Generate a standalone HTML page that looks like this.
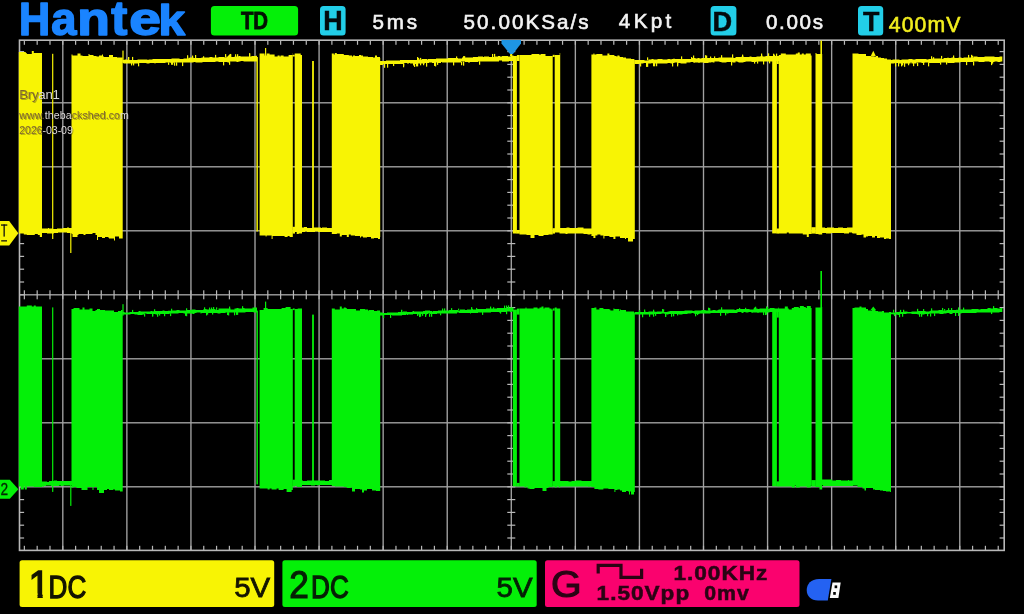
<!DOCTYPE html>
<html lang="en"><head><meta charset="utf-8"><title>Hantek oscilloscope capture</title>
<style>
html,body{margin:0;padding:0;background:#000;}
body{width:1024px;height:614px;overflow:hidden;position:relative;font-family:"Liberation Sans",sans-serif;}
svg text{white-space:pre;}
</style></head>
<body>
<svg role="img" aria-label="Hantek oscilloscope screen" width="1024" height="614" viewBox="0 0 1024 614" style="position:absolute;left:0;top:0;display:block;will-change:transform">
<rect width="1024" height="614" fill="#000"/>
<rect x="62.12" y="40.20" width="1.36" height="510.20" fill="#a2a2a2"/>
<rect x="126.19" y="40.20" width="1.36" height="510.20" fill="#a2a2a2"/>
<rect x="190.26" y="40.20" width="1.36" height="510.20" fill="#a2a2a2"/>
<rect x="254.33" y="40.20" width="1.36" height="510.20" fill="#a2a2a2"/>
<rect x="318.40" y="40.20" width="1.36" height="510.20" fill="#a2a2a2"/>
<rect x="382.47" y="40.20" width="1.36" height="510.20" fill="#a2a2a2"/>
<rect x="446.54" y="40.20" width="1.36" height="510.20" fill="#a2a2a2"/>
<rect x="510.61" y="40.20" width="1.36" height="510.20" fill="#a2a2a2"/>
<rect x="574.68" y="40.20" width="1.36" height="510.20" fill="#a2a2a2"/>
<rect x="638.75" y="40.20" width="1.36" height="510.20" fill="#a2a2a2"/>
<rect x="702.82" y="40.20" width="1.36" height="510.20" fill="#a2a2a2"/>
<rect x="766.89" y="40.20" width="1.36" height="510.20" fill="#a2a2a2"/>
<rect x="830.96" y="40.20" width="1.36" height="510.20" fill="#a2a2a2"/>
<rect x="895.03" y="40.20" width="1.36" height="510.20" fill="#a2a2a2"/>
<rect x="959.10" y="40.20" width="1.36" height="510.20" fill="#a2a2a2"/>
<rect x="19.50" y="102.12" width="984.70" height="1.36" fill="#a2a2a2"/>
<rect x="19.50" y="166.12" width="984.70" height="1.36" fill="#a2a2a2"/>
<rect x="19.50" y="230.12" width="984.70" height="1.36" fill="#a2a2a2"/>
<rect x="19.50" y="294.12" width="984.70" height="1.36" fill="#a2a2a2"/>
<rect x="19.50" y="358.12" width="984.70" height="1.36" fill="#a2a2a2"/>
<rect x="19.50" y="422.12" width="984.70" height="1.36" fill="#a2a2a2"/>
<rect x="19.50" y="486.12" width="984.70" height="1.36" fill="#a2a2a2"/>
<rect x="23.76" y="40.20" width="1.2" height="4.6" fill="#b8b8b8"/>
<rect x="23.76" y="545.80" width="1.2" height="4.6" fill="#b8b8b8"/>
<rect x="23.76" y="290.30" width="1.2" height="9" fill="#b8b8b8"/>
<rect x="36.57" y="40.20" width="1.2" height="4.6" fill="#b8b8b8"/>
<rect x="36.57" y="545.80" width="1.2" height="4.6" fill="#b8b8b8"/>
<rect x="36.57" y="290.30" width="1.2" height="9" fill="#b8b8b8"/>
<rect x="49.39" y="40.20" width="1.2" height="4.6" fill="#b8b8b8"/>
<rect x="49.39" y="545.80" width="1.2" height="4.6" fill="#b8b8b8"/>
<rect x="49.39" y="290.30" width="1.2" height="9" fill="#b8b8b8"/>
<rect x="62.20" y="40.20" width="1.2" height="4.6" fill="#b8b8b8"/>
<rect x="62.20" y="545.80" width="1.2" height="4.6" fill="#b8b8b8"/>
<rect x="62.20" y="290.30" width="1.2" height="9" fill="#b8b8b8"/>
<rect x="75.01" y="40.20" width="1.2" height="4.6" fill="#b8b8b8"/>
<rect x="75.01" y="545.80" width="1.2" height="4.6" fill="#b8b8b8"/>
<rect x="75.01" y="290.30" width="1.2" height="9" fill="#b8b8b8"/>
<rect x="87.83" y="40.20" width="1.2" height="4.6" fill="#b8b8b8"/>
<rect x="87.83" y="545.80" width="1.2" height="4.6" fill="#b8b8b8"/>
<rect x="87.83" y="290.30" width="1.2" height="9" fill="#b8b8b8"/>
<rect x="100.64" y="40.20" width="1.2" height="4.6" fill="#b8b8b8"/>
<rect x="100.64" y="545.80" width="1.2" height="4.6" fill="#b8b8b8"/>
<rect x="100.64" y="290.30" width="1.2" height="9" fill="#b8b8b8"/>
<rect x="113.46" y="40.20" width="1.2" height="4.6" fill="#b8b8b8"/>
<rect x="113.46" y="545.80" width="1.2" height="4.6" fill="#b8b8b8"/>
<rect x="113.46" y="290.30" width="1.2" height="9" fill="#b8b8b8"/>
<rect x="126.27" y="40.20" width="1.2" height="4.6" fill="#b8b8b8"/>
<rect x="126.27" y="545.80" width="1.2" height="4.6" fill="#b8b8b8"/>
<rect x="126.27" y="290.30" width="1.2" height="9" fill="#b8b8b8"/>
<rect x="139.08" y="40.20" width="1.2" height="4.6" fill="#b8b8b8"/>
<rect x="139.08" y="545.80" width="1.2" height="4.6" fill="#b8b8b8"/>
<rect x="139.08" y="290.30" width="1.2" height="9" fill="#b8b8b8"/>
<rect x="151.90" y="40.20" width="1.2" height="4.6" fill="#b8b8b8"/>
<rect x="151.90" y="545.80" width="1.2" height="4.6" fill="#b8b8b8"/>
<rect x="151.90" y="290.30" width="1.2" height="9" fill="#b8b8b8"/>
<rect x="164.71" y="40.20" width="1.2" height="4.6" fill="#b8b8b8"/>
<rect x="164.71" y="545.80" width="1.2" height="4.6" fill="#b8b8b8"/>
<rect x="164.71" y="290.30" width="1.2" height="9" fill="#b8b8b8"/>
<rect x="177.53" y="40.20" width="1.2" height="4.6" fill="#b8b8b8"/>
<rect x="177.53" y="545.80" width="1.2" height="4.6" fill="#b8b8b8"/>
<rect x="177.53" y="290.30" width="1.2" height="9" fill="#b8b8b8"/>
<rect x="190.34" y="40.20" width="1.2" height="4.6" fill="#b8b8b8"/>
<rect x="190.34" y="545.80" width="1.2" height="4.6" fill="#b8b8b8"/>
<rect x="190.34" y="290.30" width="1.2" height="9" fill="#b8b8b8"/>
<rect x="203.15" y="40.20" width="1.2" height="4.6" fill="#b8b8b8"/>
<rect x="203.15" y="545.80" width="1.2" height="4.6" fill="#b8b8b8"/>
<rect x="203.15" y="290.30" width="1.2" height="9" fill="#b8b8b8"/>
<rect x="215.97" y="40.20" width="1.2" height="4.6" fill="#b8b8b8"/>
<rect x="215.97" y="545.80" width="1.2" height="4.6" fill="#b8b8b8"/>
<rect x="215.97" y="290.30" width="1.2" height="9" fill="#b8b8b8"/>
<rect x="228.78" y="40.20" width="1.2" height="4.6" fill="#b8b8b8"/>
<rect x="228.78" y="545.80" width="1.2" height="4.6" fill="#b8b8b8"/>
<rect x="228.78" y="290.30" width="1.2" height="9" fill="#b8b8b8"/>
<rect x="241.60" y="40.20" width="1.2" height="4.6" fill="#b8b8b8"/>
<rect x="241.60" y="545.80" width="1.2" height="4.6" fill="#b8b8b8"/>
<rect x="241.60" y="290.30" width="1.2" height="9" fill="#b8b8b8"/>
<rect x="254.41" y="40.20" width="1.2" height="4.6" fill="#b8b8b8"/>
<rect x="254.41" y="545.80" width="1.2" height="4.6" fill="#b8b8b8"/>
<rect x="254.41" y="290.30" width="1.2" height="9" fill="#b8b8b8"/>
<rect x="267.22" y="40.20" width="1.2" height="4.6" fill="#b8b8b8"/>
<rect x="267.22" y="545.80" width="1.2" height="4.6" fill="#b8b8b8"/>
<rect x="267.22" y="290.30" width="1.2" height="9" fill="#b8b8b8"/>
<rect x="280.04" y="40.20" width="1.2" height="4.6" fill="#b8b8b8"/>
<rect x="280.04" y="545.80" width="1.2" height="4.6" fill="#b8b8b8"/>
<rect x="280.04" y="290.30" width="1.2" height="9" fill="#b8b8b8"/>
<rect x="292.85" y="40.20" width="1.2" height="4.6" fill="#b8b8b8"/>
<rect x="292.85" y="545.80" width="1.2" height="4.6" fill="#b8b8b8"/>
<rect x="292.85" y="290.30" width="1.2" height="9" fill="#b8b8b8"/>
<rect x="305.67" y="40.20" width="1.2" height="4.6" fill="#b8b8b8"/>
<rect x="305.67" y="545.80" width="1.2" height="4.6" fill="#b8b8b8"/>
<rect x="305.67" y="290.30" width="1.2" height="9" fill="#b8b8b8"/>
<rect x="318.48" y="40.20" width="1.2" height="4.6" fill="#b8b8b8"/>
<rect x="318.48" y="545.80" width="1.2" height="4.6" fill="#b8b8b8"/>
<rect x="318.48" y="290.30" width="1.2" height="9" fill="#b8b8b8"/>
<rect x="331.29" y="40.20" width="1.2" height="4.6" fill="#b8b8b8"/>
<rect x="331.29" y="545.80" width="1.2" height="4.6" fill="#b8b8b8"/>
<rect x="331.29" y="290.30" width="1.2" height="9" fill="#b8b8b8"/>
<rect x="344.11" y="40.20" width="1.2" height="4.6" fill="#b8b8b8"/>
<rect x="344.11" y="545.80" width="1.2" height="4.6" fill="#b8b8b8"/>
<rect x="344.11" y="290.30" width="1.2" height="9" fill="#b8b8b8"/>
<rect x="356.92" y="40.20" width="1.2" height="4.6" fill="#b8b8b8"/>
<rect x="356.92" y="545.80" width="1.2" height="4.6" fill="#b8b8b8"/>
<rect x="356.92" y="290.30" width="1.2" height="9" fill="#b8b8b8"/>
<rect x="369.74" y="40.20" width="1.2" height="4.6" fill="#b8b8b8"/>
<rect x="369.74" y="545.80" width="1.2" height="4.6" fill="#b8b8b8"/>
<rect x="369.74" y="290.30" width="1.2" height="9" fill="#b8b8b8"/>
<rect x="382.55" y="40.20" width="1.2" height="4.6" fill="#b8b8b8"/>
<rect x="382.55" y="545.80" width="1.2" height="4.6" fill="#b8b8b8"/>
<rect x="382.55" y="290.30" width="1.2" height="9" fill="#b8b8b8"/>
<rect x="395.36" y="40.20" width="1.2" height="4.6" fill="#b8b8b8"/>
<rect x="395.36" y="545.80" width="1.2" height="4.6" fill="#b8b8b8"/>
<rect x="395.36" y="290.30" width="1.2" height="9" fill="#b8b8b8"/>
<rect x="408.18" y="40.20" width="1.2" height="4.6" fill="#b8b8b8"/>
<rect x="408.18" y="545.80" width="1.2" height="4.6" fill="#b8b8b8"/>
<rect x="408.18" y="290.30" width="1.2" height="9" fill="#b8b8b8"/>
<rect x="420.99" y="40.20" width="1.2" height="4.6" fill="#b8b8b8"/>
<rect x="420.99" y="545.80" width="1.2" height="4.6" fill="#b8b8b8"/>
<rect x="420.99" y="290.30" width="1.2" height="9" fill="#b8b8b8"/>
<rect x="433.81" y="40.20" width="1.2" height="4.6" fill="#b8b8b8"/>
<rect x="433.81" y="545.80" width="1.2" height="4.6" fill="#b8b8b8"/>
<rect x="433.81" y="290.30" width="1.2" height="9" fill="#b8b8b8"/>
<rect x="446.62" y="40.20" width="1.2" height="4.6" fill="#b8b8b8"/>
<rect x="446.62" y="545.80" width="1.2" height="4.6" fill="#b8b8b8"/>
<rect x="446.62" y="290.30" width="1.2" height="9" fill="#b8b8b8"/>
<rect x="459.43" y="40.20" width="1.2" height="4.6" fill="#b8b8b8"/>
<rect x="459.43" y="545.80" width="1.2" height="4.6" fill="#b8b8b8"/>
<rect x="459.43" y="290.30" width="1.2" height="9" fill="#b8b8b8"/>
<rect x="472.25" y="40.20" width="1.2" height="4.6" fill="#b8b8b8"/>
<rect x="472.25" y="545.80" width="1.2" height="4.6" fill="#b8b8b8"/>
<rect x="472.25" y="290.30" width="1.2" height="9" fill="#b8b8b8"/>
<rect x="485.06" y="40.20" width="1.2" height="4.6" fill="#b8b8b8"/>
<rect x="485.06" y="545.80" width="1.2" height="4.6" fill="#b8b8b8"/>
<rect x="485.06" y="290.30" width="1.2" height="9" fill="#b8b8b8"/>
<rect x="497.88" y="40.20" width="1.2" height="4.6" fill="#b8b8b8"/>
<rect x="497.88" y="545.80" width="1.2" height="4.6" fill="#b8b8b8"/>
<rect x="497.88" y="290.30" width="1.2" height="9" fill="#b8b8b8"/>
<rect x="510.69" y="40.20" width="1.2" height="4.6" fill="#b8b8b8"/>
<rect x="510.69" y="545.80" width="1.2" height="4.6" fill="#b8b8b8"/>
<rect x="510.69" y="290.30" width="1.2" height="9" fill="#b8b8b8"/>
<rect x="523.50" y="40.20" width="1.2" height="4.6" fill="#b8b8b8"/>
<rect x="523.50" y="545.80" width="1.2" height="4.6" fill="#b8b8b8"/>
<rect x="523.50" y="290.30" width="1.2" height="9" fill="#b8b8b8"/>
<rect x="536.32" y="40.20" width="1.2" height="4.6" fill="#b8b8b8"/>
<rect x="536.32" y="545.80" width="1.2" height="4.6" fill="#b8b8b8"/>
<rect x="536.32" y="290.30" width="1.2" height="9" fill="#b8b8b8"/>
<rect x="549.13" y="40.20" width="1.2" height="4.6" fill="#b8b8b8"/>
<rect x="549.13" y="545.80" width="1.2" height="4.6" fill="#b8b8b8"/>
<rect x="549.13" y="290.30" width="1.2" height="9" fill="#b8b8b8"/>
<rect x="561.95" y="40.20" width="1.2" height="4.6" fill="#b8b8b8"/>
<rect x="561.95" y="545.80" width="1.2" height="4.6" fill="#b8b8b8"/>
<rect x="561.95" y="290.30" width="1.2" height="9" fill="#b8b8b8"/>
<rect x="574.76" y="40.20" width="1.2" height="4.6" fill="#b8b8b8"/>
<rect x="574.76" y="545.80" width="1.2" height="4.6" fill="#b8b8b8"/>
<rect x="574.76" y="290.30" width="1.2" height="9" fill="#b8b8b8"/>
<rect x="587.57" y="40.20" width="1.2" height="4.6" fill="#b8b8b8"/>
<rect x="587.57" y="545.80" width="1.2" height="4.6" fill="#b8b8b8"/>
<rect x="587.57" y="290.30" width="1.2" height="9" fill="#b8b8b8"/>
<rect x="600.39" y="40.20" width="1.2" height="4.6" fill="#b8b8b8"/>
<rect x="600.39" y="545.80" width="1.2" height="4.6" fill="#b8b8b8"/>
<rect x="600.39" y="290.30" width="1.2" height="9" fill="#b8b8b8"/>
<rect x="613.20" y="40.20" width="1.2" height="4.6" fill="#b8b8b8"/>
<rect x="613.20" y="545.80" width="1.2" height="4.6" fill="#b8b8b8"/>
<rect x="613.20" y="290.30" width="1.2" height="9" fill="#b8b8b8"/>
<rect x="626.02" y="40.20" width="1.2" height="4.6" fill="#b8b8b8"/>
<rect x="626.02" y="545.80" width="1.2" height="4.6" fill="#b8b8b8"/>
<rect x="626.02" y="290.30" width="1.2" height="9" fill="#b8b8b8"/>
<rect x="638.83" y="40.20" width="1.2" height="4.6" fill="#b8b8b8"/>
<rect x="638.83" y="545.80" width="1.2" height="4.6" fill="#b8b8b8"/>
<rect x="638.83" y="290.30" width="1.2" height="9" fill="#b8b8b8"/>
<rect x="651.64" y="40.20" width="1.2" height="4.6" fill="#b8b8b8"/>
<rect x="651.64" y="545.80" width="1.2" height="4.6" fill="#b8b8b8"/>
<rect x="651.64" y="290.30" width="1.2" height="9" fill="#b8b8b8"/>
<rect x="664.46" y="40.20" width="1.2" height="4.6" fill="#b8b8b8"/>
<rect x="664.46" y="545.80" width="1.2" height="4.6" fill="#b8b8b8"/>
<rect x="664.46" y="290.30" width="1.2" height="9" fill="#b8b8b8"/>
<rect x="677.27" y="40.20" width="1.2" height="4.6" fill="#b8b8b8"/>
<rect x="677.27" y="545.80" width="1.2" height="4.6" fill="#b8b8b8"/>
<rect x="677.27" y="290.30" width="1.2" height="9" fill="#b8b8b8"/>
<rect x="690.09" y="40.20" width="1.2" height="4.6" fill="#b8b8b8"/>
<rect x="690.09" y="545.80" width="1.2" height="4.6" fill="#b8b8b8"/>
<rect x="690.09" y="290.30" width="1.2" height="9" fill="#b8b8b8"/>
<rect x="702.90" y="40.20" width="1.2" height="4.6" fill="#b8b8b8"/>
<rect x="702.90" y="545.80" width="1.2" height="4.6" fill="#b8b8b8"/>
<rect x="702.90" y="290.30" width="1.2" height="9" fill="#b8b8b8"/>
<rect x="715.71" y="40.20" width="1.2" height="4.6" fill="#b8b8b8"/>
<rect x="715.71" y="545.80" width="1.2" height="4.6" fill="#b8b8b8"/>
<rect x="715.71" y="290.30" width="1.2" height="9" fill="#b8b8b8"/>
<rect x="728.53" y="40.20" width="1.2" height="4.6" fill="#b8b8b8"/>
<rect x="728.53" y="545.80" width="1.2" height="4.6" fill="#b8b8b8"/>
<rect x="728.53" y="290.30" width="1.2" height="9" fill="#b8b8b8"/>
<rect x="741.34" y="40.20" width="1.2" height="4.6" fill="#b8b8b8"/>
<rect x="741.34" y="545.80" width="1.2" height="4.6" fill="#b8b8b8"/>
<rect x="741.34" y="290.30" width="1.2" height="9" fill="#b8b8b8"/>
<rect x="754.16" y="40.20" width="1.2" height="4.6" fill="#b8b8b8"/>
<rect x="754.16" y="545.80" width="1.2" height="4.6" fill="#b8b8b8"/>
<rect x="754.16" y="290.30" width="1.2" height="9" fill="#b8b8b8"/>
<rect x="766.97" y="40.20" width="1.2" height="4.6" fill="#b8b8b8"/>
<rect x="766.97" y="545.80" width="1.2" height="4.6" fill="#b8b8b8"/>
<rect x="766.97" y="290.30" width="1.2" height="9" fill="#b8b8b8"/>
<rect x="779.78" y="40.20" width="1.2" height="4.6" fill="#b8b8b8"/>
<rect x="779.78" y="545.80" width="1.2" height="4.6" fill="#b8b8b8"/>
<rect x="779.78" y="290.30" width="1.2" height="9" fill="#b8b8b8"/>
<rect x="792.60" y="40.20" width="1.2" height="4.6" fill="#b8b8b8"/>
<rect x="792.60" y="545.80" width="1.2" height="4.6" fill="#b8b8b8"/>
<rect x="792.60" y="290.30" width="1.2" height="9" fill="#b8b8b8"/>
<rect x="805.41" y="40.20" width="1.2" height="4.6" fill="#b8b8b8"/>
<rect x="805.41" y="545.80" width="1.2" height="4.6" fill="#b8b8b8"/>
<rect x="805.41" y="290.30" width="1.2" height="9" fill="#b8b8b8"/>
<rect x="818.23" y="40.20" width="1.2" height="4.6" fill="#b8b8b8"/>
<rect x="818.23" y="545.80" width="1.2" height="4.6" fill="#b8b8b8"/>
<rect x="818.23" y="290.30" width="1.2" height="9" fill="#b8b8b8"/>
<rect x="831.04" y="40.20" width="1.2" height="4.6" fill="#b8b8b8"/>
<rect x="831.04" y="545.80" width="1.2" height="4.6" fill="#b8b8b8"/>
<rect x="831.04" y="290.30" width="1.2" height="9" fill="#b8b8b8"/>
<rect x="843.85" y="40.20" width="1.2" height="4.6" fill="#b8b8b8"/>
<rect x="843.85" y="545.80" width="1.2" height="4.6" fill="#b8b8b8"/>
<rect x="843.85" y="290.30" width="1.2" height="9" fill="#b8b8b8"/>
<rect x="856.67" y="40.20" width="1.2" height="4.6" fill="#b8b8b8"/>
<rect x="856.67" y="545.80" width="1.2" height="4.6" fill="#b8b8b8"/>
<rect x="856.67" y="290.30" width="1.2" height="9" fill="#b8b8b8"/>
<rect x="869.48" y="40.20" width="1.2" height="4.6" fill="#b8b8b8"/>
<rect x="869.48" y="545.80" width="1.2" height="4.6" fill="#b8b8b8"/>
<rect x="869.48" y="290.30" width="1.2" height="9" fill="#b8b8b8"/>
<rect x="882.30" y="40.20" width="1.2" height="4.6" fill="#b8b8b8"/>
<rect x="882.30" y="545.80" width="1.2" height="4.6" fill="#b8b8b8"/>
<rect x="882.30" y="290.30" width="1.2" height="9" fill="#b8b8b8"/>
<rect x="895.11" y="40.20" width="1.2" height="4.6" fill="#b8b8b8"/>
<rect x="895.11" y="545.80" width="1.2" height="4.6" fill="#b8b8b8"/>
<rect x="895.11" y="290.30" width="1.2" height="9" fill="#b8b8b8"/>
<rect x="907.92" y="40.20" width="1.2" height="4.6" fill="#b8b8b8"/>
<rect x="907.92" y="545.80" width="1.2" height="4.6" fill="#b8b8b8"/>
<rect x="907.92" y="290.30" width="1.2" height="9" fill="#b8b8b8"/>
<rect x="920.74" y="40.20" width="1.2" height="4.6" fill="#b8b8b8"/>
<rect x="920.74" y="545.80" width="1.2" height="4.6" fill="#b8b8b8"/>
<rect x="920.74" y="290.30" width="1.2" height="9" fill="#b8b8b8"/>
<rect x="933.55" y="40.20" width="1.2" height="4.6" fill="#b8b8b8"/>
<rect x="933.55" y="545.80" width="1.2" height="4.6" fill="#b8b8b8"/>
<rect x="933.55" y="290.30" width="1.2" height="9" fill="#b8b8b8"/>
<rect x="946.37" y="40.20" width="1.2" height="4.6" fill="#b8b8b8"/>
<rect x="946.37" y="545.80" width="1.2" height="4.6" fill="#b8b8b8"/>
<rect x="946.37" y="290.30" width="1.2" height="9" fill="#b8b8b8"/>
<rect x="959.18" y="40.20" width="1.2" height="4.6" fill="#b8b8b8"/>
<rect x="959.18" y="545.80" width="1.2" height="4.6" fill="#b8b8b8"/>
<rect x="959.18" y="290.30" width="1.2" height="9" fill="#b8b8b8"/>
<rect x="971.99" y="40.20" width="1.2" height="4.6" fill="#b8b8b8"/>
<rect x="971.99" y="545.80" width="1.2" height="4.6" fill="#b8b8b8"/>
<rect x="971.99" y="290.30" width="1.2" height="9" fill="#b8b8b8"/>
<rect x="984.81" y="40.20" width="1.2" height="4.6" fill="#b8b8b8"/>
<rect x="984.81" y="545.80" width="1.2" height="4.6" fill="#b8b8b8"/>
<rect x="984.81" y="290.30" width="1.2" height="9" fill="#b8b8b8"/>
<rect x="997.62" y="40.20" width="1.2" height="4.6" fill="#b8b8b8"/>
<rect x="997.62" y="545.80" width="1.2" height="4.6" fill="#b8b8b8"/>
<rect x="997.62" y="290.30" width="1.2" height="9" fill="#b8b8b8"/>
<rect x="19.50" y="51.00" width="4.6" height="1.2" fill="#b8b8b8"/>
<rect x="999.60" y="51.00" width="4.6" height="1.2" fill="#b8b8b8"/>
<rect x="507.29" y="51.00" width="8" height="1.2" fill="#b8b8b8"/>
<rect x="19.50" y="63.80" width="4.6" height="1.2" fill="#b8b8b8"/>
<rect x="999.60" y="63.80" width="4.6" height="1.2" fill="#b8b8b8"/>
<rect x="507.29" y="63.80" width="8" height="1.2" fill="#b8b8b8"/>
<rect x="19.50" y="76.60" width="4.6" height="1.2" fill="#b8b8b8"/>
<rect x="999.60" y="76.60" width="4.6" height="1.2" fill="#b8b8b8"/>
<rect x="507.29" y="76.60" width="8" height="1.2" fill="#b8b8b8"/>
<rect x="19.50" y="89.40" width="4.6" height="1.2" fill="#b8b8b8"/>
<rect x="999.60" y="89.40" width="4.6" height="1.2" fill="#b8b8b8"/>
<rect x="507.29" y="89.40" width="8" height="1.2" fill="#b8b8b8"/>
<rect x="19.50" y="102.20" width="4.6" height="1.2" fill="#b8b8b8"/>
<rect x="999.60" y="102.20" width="4.6" height="1.2" fill="#b8b8b8"/>
<rect x="507.29" y="102.20" width="8" height="1.2" fill="#b8b8b8"/>
<rect x="19.50" y="115.00" width="4.6" height="1.2" fill="#b8b8b8"/>
<rect x="999.60" y="115.00" width="4.6" height="1.2" fill="#b8b8b8"/>
<rect x="507.29" y="115.00" width="8" height="1.2" fill="#b8b8b8"/>
<rect x="19.50" y="127.80" width="4.6" height="1.2" fill="#b8b8b8"/>
<rect x="999.60" y="127.80" width="4.6" height="1.2" fill="#b8b8b8"/>
<rect x="507.29" y="127.80" width="8" height="1.2" fill="#b8b8b8"/>
<rect x="19.50" y="140.60" width="4.6" height="1.2" fill="#b8b8b8"/>
<rect x="999.60" y="140.60" width="4.6" height="1.2" fill="#b8b8b8"/>
<rect x="507.29" y="140.60" width="8" height="1.2" fill="#b8b8b8"/>
<rect x="19.50" y="153.40" width="4.6" height="1.2" fill="#b8b8b8"/>
<rect x="999.60" y="153.40" width="4.6" height="1.2" fill="#b8b8b8"/>
<rect x="507.29" y="153.40" width="8" height="1.2" fill="#b8b8b8"/>
<rect x="19.50" y="166.20" width="4.6" height="1.2" fill="#b8b8b8"/>
<rect x="999.60" y="166.20" width="4.6" height="1.2" fill="#b8b8b8"/>
<rect x="507.29" y="166.20" width="8" height="1.2" fill="#b8b8b8"/>
<rect x="19.50" y="179.00" width="4.6" height="1.2" fill="#b8b8b8"/>
<rect x="999.60" y="179.00" width="4.6" height="1.2" fill="#b8b8b8"/>
<rect x="507.29" y="179.00" width="8" height="1.2" fill="#b8b8b8"/>
<rect x="19.50" y="191.80" width="4.6" height="1.2" fill="#b8b8b8"/>
<rect x="999.60" y="191.80" width="4.6" height="1.2" fill="#b8b8b8"/>
<rect x="507.29" y="191.80" width="8" height="1.2" fill="#b8b8b8"/>
<rect x="19.50" y="204.60" width="4.6" height="1.2" fill="#b8b8b8"/>
<rect x="999.60" y="204.60" width="4.6" height="1.2" fill="#b8b8b8"/>
<rect x="507.29" y="204.60" width="8" height="1.2" fill="#b8b8b8"/>
<rect x="19.50" y="217.40" width="4.6" height="1.2" fill="#b8b8b8"/>
<rect x="999.60" y="217.40" width="4.6" height="1.2" fill="#b8b8b8"/>
<rect x="507.29" y="217.40" width="8" height="1.2" fill="#b8b8b8"/>
<rect x="19.50" y="230.20" width="4.6" height="1.2" fill="#b8b8b8"/>
<rect x="999.60" y="230.20" width="4.6" height="1.2" fill="#b8b8b8"/>
<rect x="507.29" y="230.20" width="8" height="1.2" fill="#b8b8b8"/>
<rect x="19.50" y="243.00" width="4.6" height="1.2" fill="#b8b8b8"/>
<rect x="999.60" y="243.00" width="4.6" height="1.2" fill="#b8b8b8"/>
<rect x="507.29" y="243.00" width="8" height="1.2" fill="#b8b8b8"/>
<rect x="19.50" y="255.80" width="4.6" height="1.2" fill="#b8b8b8"/>
<rect x="999.60" y="255.80" width="4.6" height="1.2" fill="#b8b8b8"/>
<rect x="507.29" y="255.80" width="8" height="1.2" fill="#b8b8b8"/>
<rect x="19.50" y="268.60" width="4.6" height="1.2" fill="#b8b8b8"/>
<rect x="999.60" y="268.60" width="4.6" height="1.2" fill="#b8b8b8"/>
<rect x="507.29" y="268.60" width="8" height="1.2" fill="#b8b8b8"/>
<rect x="19.50" y="281.40" width="4.6" height="1.2" fill="#b8b8b8"/>
<rect x="999.60" y="281.40" width="4.6" height="1.2" fill="#b8b8b8"/>
<rect x="507.29" y="281.40" width="8" height="1.2" fill="#b8b8b8"/>
<rect x="19.50" y="294.20" width="4.6" height="1.2" fill="#b8b8b8"/>
<rect x="999.60" y="294.20" width="4.6" height="1.2" fill="#b8b8b8"/>
<rect x="507.29" y="294.20" width="8" height="1.2" fill="#b8b8b8"/>
<rect x="19.50" y="307.00" width="4.6" height="1.2" fill="#b8b8b8"/>
<rect x="999.60" y="307.00" width="4.6" height="1.2" fill="#b8b8b8"/>
<rect x="507.29" y="307.00" width="8" height="1.2" fill="#b8b8b8"/>
<rect x="19.50" y="319.80" width="4.6" height="1.2" fill="#b8b8b8"/>
<rect x="999.60" y="319.80" width="4.6" height="1.2" fill="#b8b8b8"/>
<rect x="507.29" y="319.80" width="8" height="1.2" fill="#b8b8b8"/>
<rect x="19.50" y="332.60" width="4.6" height="1.2" fill="#b8b8b8"/>
<rect x="999.60" y="332.60" width="4.6" height="1.2" fill="#b8b8b8"/>
<rect x="507.29" y="332.60" width="8" height="1.2" fill="#b8b8b8"/>
<rect x="19.50" y="345.40" width="4.6" height="1.2" fill="#b8b8b8"/>
<rect x="999.60" y="345.40" width="4.6" height="1.2" fill="#b8b8b8"/>
<rect x="507.29" y="345.40" width="8" height="1.2" fill="#b8b8b8"/>
<rect x="19.50" y="358.20" width="4.6" height="1.2" fill="#b8b8b8"/>
<rect x="999.60" y="358.20" width="4.6" height="1.2" fill="#b8b8b8"/>
<rect x="507.29" y="358.20" width="8" height="1.2" fill="#b8b8b8"/>
<rect x="19.50" y="371.00" width="4.6" height="1.2" fill="#b8b8b8"/>
<rect x="999.60" y="371.00" width="4.6" height="1.2" fill="#b8b8b8"/>
<rect x="507.29" y="371.00" width="8" height="1.2" fill="#b8b8b8"/>
<rect x="19.50" y="383.80" width="4.6" height="1.2" fill="#b8b8b8"/>
<rect x="999.60" y="383.80" width="4.6" height="1.2" fill="#b8b8b8"/>
<rect x="507.29" y="383.80" width="8" height="1.2" fill="#b8b8b8"/>
<rect x="19.50" y="396.60" width="4.6" height="1.2" fill="#b8b8b8"/>
<rect x="999.60" y="396.60" width="4.6" height="1.2" fill="#b8b8b8"/>
<rect x="507.29" y="396.60" width="8" height="1.2" fill="#b8b8b8"/>
<rect x="19.50" y="409.40" width="4.6" height="1.2" fill="#b8b8b8"/>
<rect x="999.60" y="409.40" width="4.6" height="1.2" fill="#b8b8b8"/>
<rect x="507.29" y="409.40" width="8" height="1.2" fill="#b8b8b8"/>
<rect x="19.50" y="422.20" width="4.6" height="1.2" fill="#b8b8b8"/>
<rect x="999.60" y="422.20" width="4.6" height="1.2" fill="#b8b8b8"/>
<rect x="507.29" y="422.20" width="8" height="1.2" fill="#b8b8b8"/>
<rect x="19.50" y="435.00" width="4.6" height="1.2" fill="#b8b8b8"/>
<rect x="999.60" y="435.00" width="4.6" height="1.2" fill="#b8b8b8"/>
<rect x="507.29" y="435.00" width="8" height="1.2" fill="#b8b8b8"/>
<rect x="19.50" y="447.80" width="4.6" height="1.2" fill="#b8b8b8"/>
<rect x="999.60" y="447.80" width="4.6" height="1.2" fill="#b8b8b8"/>
<rect x="507.29" y="447.80" width="8" height="1.2" fill="#b8b8b8"/>
<rect x="19.50" y="460.60" width="4.6" height="1.2" fill="#b8b8b8"/>
<rect x="999.60" y="460.60" width="4.6" height="1.2" fill="#b8b8b8"/>
<rect x="507.29" y="460.60" width="8" height="1.2" fill="#b8b8b8"/>
<rect x="19.50" y="473.40" width="4.6" height="1.2" fill="#b8b8b8"/>
<rect x="999.60" y="473.40" width="4.6" height="1.2" fill="#b8b8b8"/>
<rect x="507.29" y="473.40" width="8" height="1.2" fill="#b8b8b8"/>
<rect x="19.50" y="486.20" width="4.6" height="1.2" fill="#b8b8b8"/>
<rect x="999.60" y="486.20" width="4.6" height="1.2" fill="#b8b8b8"/>
<rect x="507.29" y="486.20" width="8" height="1.2" fill="#b8b8b8"/>
<rect x="19.50" y="499.00" width="4.6" height="1.2" fill="#b8b8b8"/>
<rect x="999.60" y="499.00" width="4.6" height="1.2" fill="#b8b8b8"/>
<rect x="507.29" y="499.00" width="8" height="1.2" fill="#b8b8b8"/>
<rect x="19.50" y="511.80" width="4.6" height="1.2" fill="#b8b8b8"/>
<rect x="999.60" y="511.80" width="4.6" height="1.2" fill="#b8b8b8"/>
<rect x="507.29" y="511.80" width="8" height="1.2" fill="#b8b8b8"/>
<rect x="19.50" y="524.60" width="4.6" height="1.2" fill="#b8b8b8"/>
<rect x="999.60" y="524.60" width="4.6" height="1.2" fill="#b8b8b8"/>
<rect x="507.29" y="524.60" width="8" height="1.2" fill="#b8b8b8"/>
<rect x="19.50" y="537.40" width="4.6" height="1.2" fill="#b8b8b8"/>
<rect x="999.60" y="537.40" width="4.6" height="1.2" fill="#b8b8b8"/>
<rect x="507.29" y="537.40" width="8" height="1.2" fill="#b8b8b8"/>
<rect x="19.50" y="40.20" width="984.70" height="510.20" fill="none" stroke="#b8b8b8" stroke-width="1.6"/>
<g shape-rendering="auto">
<polygon fill="#f8f404" points="122.5,60.0 124.5,60.0 124.5,59.5 127.5,59.5 127.5,60.0 128.5,60.0 128.5,60.0 132.5,60.0 132.5,60.0 134.5,60.0 134.5,60.0 135.5,60.0 135.5,60.0 137.5,60.0 137.5,59.5 138.5,59.5 138.5,59.5 141.5,59.5 141.5,59.5 143.5,59.5 143.5,59.5 147.5,59.5 147.5,60.0 148.5,60.0 148.5,59.5 152.5,59.5 152.5,59.0 154.5,59.0 154.5,59.0 159.5,59.0 159.5,59.0 160.5,59.0 160.5,59.0 164.5,59.0 164.5,59.0 165.5,59.0 165.5,59.0 166.5,59.0 166.5,59.0 168.5,59.0 168.5,59.0 171.5,59.0 171.5,58.5 175.5,58.5 175.5,58.5 179.5,58.5 179.5,59.0 183.5,59.0 183.5,58.5 188.5,58.5 188.5,58.0 189.5,58.0 189.5,57.5 193.5,57.5 193.5,58.0 195.5,58.0 195.5,58.0 196.5,58.0 196.5,58.0 201.5,58.0 201.5,57.5 205.5,57.5 205.5,57.5 209.5,57.5 209.5,57.0 212.5,57.0 212.5,57.5 216.5,57.5 216.5,57.5 218.5,57.5 218.5,57.0 222.5,57.0 222.5,57.0 224.5,57.0 224.5,57.5 226.5,57.5 226.5,56.5 228.5,56.5 228.5,57.0 230.5,57.0 230.5,57.0 234.5,57.0 234.5,56.5 238.5,56.5 238.5,56.0 240.5,56.0 240.5,56.5 243.5,56.5 243.5,56.5 247.5,56.5 247.5,56.5 248.5,56.5 248.5,56.5 251.5,56.5 251.5,56.0 253.5,56.0 253.5,56.0 256.5,56.0 256.5,55.5 257.0,55.5 257.0,61.5 255.5,61.5 255.5,61.5 253.5,61.5 253.5,61.5 250.5,61.5 250.5,61.5 249.5,61.5 249.5,61.5 247.5,61.5 247.5,61.5 243.5,61.5 243.5,61.0 240.5,61.0 240.5,61.5 238.5,61.5 238.5,62.0 236.5,62.0 236.5,61.5 234.5,61.5 234.5,61.5 232.5,61.5 232.5,61.5 229.5,61.5 229.5,62.5 227.5,62.5 227.5,62.0 222.5,62.0 222.5,62.0 218.5,62.0 218.5,61.5 215.5,61.5 215.5,62.0 213.5,62.0 213.5,62.0 210.5,62.0 210.5,62.0 208.5,62.0 208.5,62.0 205.5,62.0 205.5,62.0 202.5,62.0 202.5,62.5 197.5,62.5 197.5,62.5 195.5,62.5 195.5,62.0 193.5,62.0 193.5,62.5 190.5,62.5 190.5,62.5 186.5,62.5 186.5,62.5 184.5,62.5 184.5,62.5 183.5,62.5 183.5,62.5 178.5,62.5 178.5,62.5 173.5,62.5 173.5,63.0 170.5,63.0 170.5,62.5 165.5,62.5 165.5,63.0 160.5,63.0 160.5,63.0 155.5,63.0 155.5,63.5 154.5,63.5 154.5,63.0 149.5,63.0 149.5,63.5 146.5,63.5 146.5,63.0 145.5,63.0 145.5,63.0 142.5,63.0 142.5,63.0 138.5,63.0 138.5,63.5 134.5,63.5 134.5,63.5 129.5,63.5 129.5,63.5 127.5,63.5 127.5,63.5 123.5,63.5 123.5,63.0 122.5,63.0"/>
<rect x="249.00" y="53.34" width="1.20" height="3.50" fill="#f8f404"/>
<rect x="249.00" y="53.34" width="1.20" height="3.50" fill="#f8f404"/>
<rect x="132.00" y="56.91" width="1.20" height="3.50" fill="#f8f404"/>
<rect x="229.00" y="54.45" width="1.20" height="3.00" fill="#f8f404"/>
<rect x="176.00" y="62.19" width="1.20" height="3.50" fill="#f8f404"/>
<rect x="133.00" y="62.92" width="1.20" height="2.50" fill="#f8f404"/>
<rect x="182.00" y="62.08" width="1.20" height="4.00" fill="#f8f404"/>
<rect x="131.00" y="62.95" width="1.20" height="2.50" fill="#f8f404"/>
<rect x="195.00" y="54.99" width="1.20" height="3.50" fill="#f8f404"/>
<rect x="128.00" y="57.03" width="1.20" height="3.50" fill="#f8f404"/>
<rect x="174.00" y="62.22" width="1.20" height="3.50" fill="#f8f404"/>
<rect x="203.00" y="56.25" width="1.20" height="2.00" fill="#f8f404"/>
<rect x="235.00" y="54.27" width="1.20" height="3.00" fill="#f8f404"/>
<rect x="187.00" y="56.73" width="1.20" height="2.00" fill="#f8f404"/>
<rect x="138.00" y="62.83" width="1.20" height="3.50" fill="#f8f404"/>
<rect x="187.00" y="55.23" width="1.20" height="3.50" fill="#f8f404"/>
<rect x="128.00" y="57.03" width="1.20" height="3.50" fill="#f8f404"/>
<rect x="172.00" y="62.25" width="1.20" height="2.50" fill="#f8f404"/>
<rect x="223.00" y="61.38" width="1.20" height="4.00" fill="#f8f404"/>
<rect x="237.00" y="54.21" width="1.20" height="3.00" fill="#f8f404"/>
<rect x="192.00" y="55.58" width="1.20" height="3.00" fill="#f8f404"/>
<rect x="225.00" y="54.08" width="1.20" height="3.50" fill="#f8f404"/>
<rect x="168.00" y="62.32" width="1.20" height="2.50" fill="#f8f404"/>
<rect x="230.00" y="53.92" width="1.20" height="3.50" fill="#f8f404"/>
<rect x="229.00" y="61.28" width="1.20" height="3.50" fill="#f8f404"/>
<rect x="171.00" y="62.27" width="1.20" height="2.50" fill="#f8f404"/>
<rect x="228.00" y="55.48" width="1.20" height="2.00" fill="#f8f404"/>
<rect x="215.00" y="54.88" width="1.20" height="3.00" fill="#f8f404"/>
<rect x="230.00" y="54.42" width="1.20" height="3.00" fill="#f8f404"/>
<polygon fill="#f8f404" points="380.0,61.0 382.0,61.0 382.0,61.0 384.0,61.0 384.0,61.0 386.0,61.0 386.0,60.5 388.0,60.5 388.0,60.5 390.0,60.5 390.0,60.5 394.0,60.5 394.0,60.5 395.0,60.5 395.0,60.5 400.0,60.5 400.0,60.0 405.0,60.0 405.0,60.0 410.0,60.0 410.0,60.0 413.0,60.0 413.0,60.0 418.0,60.0 418.0,59.5 420.0,59.5 420.0,59.5 422.0,59.5 422.0,59.0 427.0,59.0 427.0,59.5 428.0,59.5 428.0,59.0 433.0,59.0 433.0,59.0 436.0,59.0 436.0,58.5 441.0,58.5 441.0,58.5 446.0,58.5 446.0,58.5 448.0,58.5 448.0,58.0 449.0,58.0 449.0,58.0 453.0,58.0 453.0,58.0 458.0,58.0 458.0,58.5 462.0,58.5 462.0,57.5 466.0,57.5 466.0,57.5 471.0,57.5 471.0,57.5 473.0,57.5 473.0,57.0 477.0,57.0 477.0,57.0 478.0,57.0 478.0,56.5 483.0,56.5 483.0,57.0 484.0,57.0 484.0,56.5 489.0,56.5 489.0,57.0 492.0,57.0 492.0,57.0 494.0,57.0 494.0,56.5 496.0,56.5 496.0,56.5 498.0,56.5 498.0,56.0 500.0,56.0 500.0,56.5 502.0,56.5 502.0,56.0 506.0,56.0 506.0,56.0 508.0,56.0 508.0,56.5 511.0,56.5 511.0,55.5 513.0,55.5 513.0,55.5 513.5,55.5 513.5,61.0 513.0,61.0 513.0,61.0 511.0,61.0 511.0,61.0 509.0,61.0 509.0,61.5 504.0,61.5 504.0,61.5 502.0,61.5 502.0,60.5 501.0,60.5 501.0,60.5 499.0,60.5 499.0,61.5 497.0,61.5 497.0,61.5 494.0,61.5 494.0,61.5 489.0,61.5 489.0,61.5 487.0,61.5 487.0,61.5 484.0,61.5 484.0,61.5 481.0,61.5 481.0,61.5 478.0,61.5 478.0,62.0 474.0,62.0 474.0,62.0 470.0,62.0 470.0,62.5 468.0,62.5 468.0,62.0 465.0,62.0 465.0,61.5 461.0,61.5 461.0,62.5 458.0,62.5 458.0,62.5 453.0,62.5 453.0,62.5 449.0,62.5 449.0,62.5 445.0,62.5 445.0,62.5 443.0,62.5 443.0,62.5 442.0,62.5 442.0,62.0 441.0,62.0 441.0,63.0 438.0,63.0 438.0,63.0 437.0,63.0 437.0,62.5 436.0,62.5 436.0,63.0 434.0,63.0 434.0,63.0 433.0,63.0 433.0,63.0 432.0,63.0 432.0,62.5 429.0,62.5 429.0,63.0 425.0,63.0 425.0,63.5 420.0,63.5 420.0,63.5 419.0,63.5 419.0,63.5 418.0,63.5 418.0,64.0 414.0,64.0 414.0,63.5 412.0,63.5 412.0,63.5 410.0,63.5 410.0,63.0 409.0,63.0 409.0,63.5 407.0,63.5 407.0,63.0 404.0,63.0 404.0,63.5 403.0,63.5 403.0,64.0 399.0,64.0 399.0,64.0 395.0,64.0 395.0,64.0 391.0,64.0 391.0,64.0 387.0,64.0 387.0,64.0 383.0,64.0 383.0,65.0 380.0,65.0"/>
<rect x="479.00" y="61.23" width="1.20" height="3.50" fill="#f8f404"/>
<rect x="403.00" y="63.28" width="1.20" height="2.50" fill="#f8f404"/>
<rect x="403.00" y="63.28" width="1.20" height="4.00" fill="#f8f404"/>
<rect x="434.00" y="62.44" width="1.20" height="3.50" fill="#f8f404"/>
<rect x="423.00" y="62.74" width="1.20" height="2.50" fill="#f8f404"/>
<rect x="426.00" y="62.66" width="1.20" height="4.00" fill="#f8f404"/>
<rect x="384.00" y="63.79" width="1.20" height="4.00" fill="#f8f404"/>
<rect x="420.00" y="57.88" width="1.20" height="2.00" fill="#f8f404"/>
<rect x="510.00" y="54.24" width="1.20" height="2.00" fill="#f8f404"/>
<rect x="393.00" y="63.55" width="1.20" height="2.50" fill="#f8f404"/>
<rect x="417.00" y="62.90" width="1.20" height="3.50" fill="#f8f404"/>
<rect x="492.00" y="53.97" width="1.20" height="3.00" fill="#f8f404"/>
<rect x="435.00" y="62.42" width="1.20" height="4.00" fill="#f8f404"/>
<rect x="456.00" y="56.43" width="1.20" height="2.00" fill="#f8f404"/>
<rect x="418.00" y="57.96" width="1.20" height="2.00" fill="#f8f404"/>
<rect x="437.00" y="62.36" width="1.20" height="2.50" fill="#f8f404"/>
<rect x="464.00" y="56.10" width="1.20" height="2.00" fill="#f8f404"/>
<rect x="461.00" y="61.72" width="1.20" height="3.50" fill="#f8f404"/>
<rect x="494.00" y="53.89" width="1.20" height="3.00" fill="#f8f404"/>
<rect x="511.00" y="53.20" width="1.20" height="3.00" fill="#f8f404"/>
<rect x="463.00" y="61.66" width="1.20" height="4.00" fill="#f8f404"/>
<rect x="413.00" y="63.01" width="1.20" height="2.50" fill="#f8f404"/>
<rect x="416.00" y="62.93" width="1.20" height="3.50" fill="#f8f404"/>
<rect x="463.00" y="56.14" width="1.20" height="2.00" fill="#f8f404"/>
<rect x="420.00" y="62.82" width="1.20" height="2.50" fill="#f8f404"/>
<rect x="417.00" y="57.00" width="1.20" height="3.00" fill="#f8f404"/>
<rect x="387.00" y="63.71" width="1.20" height="4.00" fill="#f8f404"/>
<rect x="453.00" y="61.93" width="1.20" height="3.50" fill="#f8f404"/>
<rect x="414.00" y="62.98" width="1.20" height="4.00" fill="#f8f404"/>
<polygon fill="#f8f404" points="634.5,60.0 639.5,60.0 639.5,60.0 644.5,60.0 644.5,60.5 648.5,60.5 648.5,59.5 651.5,59.5 651.5,59.0 653.5,59.0 653.5,59.5 655.5,59.5 655.5,59.5 657.5,59.5 657.5,59.0 662.5,59.0 662.5,59.5 667.5,59.5 667.5,59.0 670.5,59.0 670.5,59.5 671.5,59.5 671.5,59.0 673.5,59.0 673.5,58.5 674.5,58.5 674.5,59.0 679.5,59.0 679.5,59.0 682.5,59.0 682.5,59.0 683.5,59.0 683.5,59.0 688.5,59.0 688.5,59.0 691.5,59.0 691.5,58.0 695.5,58.0 695.5,58.5 697.5,58.5 697.5,58.0 699.5,58.0 699.5,58.5 701.5,58.5 701.5,58.0 704.5,58.0 704.5,58.0 706.5,58.0 706.5,58.0 709.5,58.0 709.5,58.0 711.5,58.0 711.5,58.0 713.5,58.0 713.5,58.0 715.5,58.0 715.5,58.0 716.5,58.0 716.5,58.0 718.5,58.0 718.5,57.5 720.5,57.5 720.5,57.5 722.5,57.5 722.5,57.5 723.5,57.5 723.5,57.5 725.5,57.5 725.5,57.5 730.5,57.5 730.5,57.5 732.5,57.5 732.5,57.5 733.5,57.5 733.5,58.0 735.5,58.0 735.5,57.0 736.5,57.0 736.5,57.0 739.5,57.0 739.5,57.0 740.5,57.0 740.5,57.0 741.5,57.0 741.5,56.5 743.5,56.5 743.5,57.0 745.5,57.0 745.5,57.0 749.5,57.0 749.5,56.5 751.5,56.5 751.5,57.0 756.5,57.0 756.5,56.5 760.5,56.5 760.5,56.0 762.5,56.0 762.5,56.5 765.5,56.5 765.5,56.0 767.5,56.0 767.5,56.0 771.5,56.0 771.5,56.0 773.5,56.0 773.5,56.0 778.5,56.0 778.5,56.0 779.0,56.0 779.0,61.0 778.5,61.0 778.5,61.0 773.5,61.0 773.5,61.5 770.5,61.5 770.5,61.5 767.5,61.5 767.5,61.5 765.5,61.5 765.5,61.5 761.5,61.5 761.5,61.5 756.5,61.5 756.5,62.0 751.5,62.0 751.5,61.5 749.5,61.5 749.5,61.5 745.5,61.5 745.5,62.0 743.5,62.0 743.5,62.5 738.5,62.5 738.5,62.0 737.5,62.0 737.5,61.5 735.5,61.5 735.5,62.5 732.5,62.5 732.5,62.0 729.5,62.0 729.5,62.0 726.5,62.0 726.5,62.5 721.5,62.5 721.5,62.0 719.5,62.0 719.5,61.5 714.5,61.5 714.5,62.5 712.5,62.5 712.5,62.0 711.5,62.0 711.5,62.5 708.5,62.5 708.5,63.0 703.5,63.0 703.5,62.5 699.5,62.5 699.5,63.0 698.5,63.0 698.5,62.5 694.5,62.5 694.5,63.0 693.5,63.0 693.5,62.0 690.5,62.0 690.5,62.5 688.5,62.5 688.5,62.5 686.5,62.5 686.5,63.5 682.5,63.5 682.5,63.5 681.5,63.5 681.5,63.5 680.5,63.5 680.5,63.0 677.5,63.0 677.5,62.5 674.5,62.5 674.5,63.0 672.5,63.0 672.5,63.5 670.5,63.5 670.5,63.0 669.5,63.0 669.5,63.0 667.5,63.0 667.5,63.5 662.5,63.5 662.5,63.5 657.5,63.5 657.5,63.5 652.5,63.5 652.5,63.0 651.5,63.0 651.5,63.5 647.5,63.5 647.5,63.0 643.5,63.0 643.5,63.5 639.5,63.5 639.5,64.0 634.5,64.0"/>
<rect x="731.00" y="61.50" width="1.20" height="4.00" fill="#f8f404"/>
<rect x="677.00" y="62.39" width="1.20" height="2.50" fill="#f8f404"/>
<rect x="776.00" y="53.59" width="1.20" height="3.00" fill="#f8f404"/>
<rect x="774.00" y="54.65" width="1.20" height="2.00" fill="#f8f404"/>
<rect x="677.00" y="62.39" width="1.20" height="4.00" fill="#f8f404"/>
<rect x="773.00" y="53.67" width="1.20" height="3.00" fill="#f8f404"/>
<rect x="691.00" y="57.06" width="1.20" height="2.00" fill="#f8f404"/>
<rect x="647.00" y="62.89" width="1.20" height="4.00" fill="#f8f404"/>
<rect x="710.00" y="56.51" width="1.20" height="2.00" fill="#f8f404"/>
<rect x="721.00" y="55.19" width="1.20" height="3.00" fill="#f8f404"/>
<rect x="761.00" y="55.02" width="1.20" height="2.00" fill="#f8f404"/>
<rect x="706.00" y="55.62" width="1.20" height="3.00" fill="#f8f404"/>
<rect x="640.00" y="63.01" width="1.20" height="3.50" fill="#f8f404"/>
<rect x="732.00" y="54.37" width="1.20" height="3.50" fill="#f8f404"/>
<rect x="656.00" y="62.74" width="1.20" height="3.50" fill="#f8f404"/>
<rect x="653.00" y="62.79" width="1.20" height="3.50" fill="#f8f404"/>
<rect x="742.00" y="55.58" width="1.20" height="2.00" fill="#f8f404"/>
<rect x="769.00" y="60.87" width="1.20" height="2.50" fill="#f8f404"/>
<rect x="763.00" y="60.97" width="1.20" height="3.50" fill="#f8f404"/>
<rect x="646.00" y="62.91" width="1.20" height="4.00" fill="#f8f404"/>
<rect x="647.00" y="57.34" width="1.20" height="3.00" fill="#f8f404"/>
<rect x="757.00" y="61.07" width="1.20" height="2.50" fill="#f8f404"/>
<rect x="754.00" y="61.12" width="1.20" height="2.50" fill="#f8f404"/>
<rect x="672.00" y="62.48" width="1.20" height="4.00" fill="#f8f404"/>
<rect x="681.00" y="56.35" width="1.20" height="3.00" fill="#f8f404"/>
<rect x="761.00" y="53.52" width="1.20" height="3.50" fill="#f8f404"/>
<rect x="693.00" y="55.50" width="1.20" height="3.50" fill="#f8f404"/>
<rect x="714.00" y="56.39" width="1.20" height="2.00" fill="#f8f404"/>
<rect x="768.00" y="53.32" width="1.20" height="3.50" fill="#f8f404"/>
<rect x="742.00" y="54.58" width="1.20" height="3.00" fill="#f8f404"/>
<rect x="705.00" y="55.15" width="1.20" height="3.50" fill="#f8f404"/>
<rect x="654.00" y="62.78" width="1.20" height="3.50" fill="#f8f404"/>
<polygon fill="#f8f404" points="890.5,60.0 892.5,60.0 892.5,59.5 894.5,59.5 894.5,59.5 899.5,59.5 899.5,60.0 901.5,60.0 901.5,59.5 906.5,59.5 906.5,59.5 908.5,59.5 908.5,59.0 912.5,59.0 912.5,59.5 915.5,59.5 915.5,59.0 917.5,59.0 917.5,59.0 919.5,59.0 919.5,59.0 921.5,59.0 921.5,59.0 924.5,59.0 924.5,59.0 926.5,59.0 926.5,59.5 928.5,59.5 928.5,59.0 931.5,59.0 931.5,58.5 933.5,58.5 933.5,58.5 935.5,58.5 935.5,58.5 936.5,58.5 936.5,58.5 938.5,58.5 938.5,58.5 939.5,58.5 939.5,58.5 941.5,58.5 941.5,59.0 943.5,59.0 943.5,58.0 947.5,58.0 947.5,57.5 948.5,57.5 948.5,58.0 951.5,58.0 951.5,57.5 954.5,57.5 954.5,58.0 958.5,58.0 958.5,57.5 961.5,57.5 961.5,58.0 963.5,58.0 963.5,57.5 964.5,57.5 964.5,57.5 966.5,57.5 966.5,57.5 968.5,57.5 968.5,57.5 973.5,57.5 973.5,56.5 977.5,56.5 977.5,57.0 979.5,57.0 979.5,57.0 981.5,57.0 981.5,57.0 984.5,57.0 984.5,56.5 989.5,56.5 989.5,56.5 992.5,56.5 992.5,56.5 993.5,56.5 993.5,56.5 994.5,56.5 994.5,57.0 999.5,57.0 999.5,56.5 1002.3,56.5 1002.3,61.5 1000.5,61.5 1000.5,62.0 997.5,62.0 997.5,61.5 996.5,61.5 996.5,61.5 994.5,61.5 994.5,62.0 989.5,62.0 989.5,61.5 988.5,61.5 988.5,61.5 984.5,61.5 984.5,62.0 980.5,62.0 980.5,62.0 978.5,62.0 978.5,61.5 973.5,61.5 973.5,62.0 971.5,62.0 971.5,62.0 969.5,62.0 969.5,62.0 968.5,62.0 968.5,62.0 964.5,62.0 964.5,62.0 962.5,62.0 962.5,62.0 960.5,62.0 960.5,62.5 956.5,62.5 956.5,62.5 955.5,62.5 955.5,62.5 954.5,62.5 954.5,63.0 951.5,63.0 951.5,63.0 947.5,63.0 947.5,62.5 942.5,62.5 942.5,62.5 940.5,62.5 940.5,63.0 935.5,63.0 935.5,63.0 931.5,63.0 931.5,63.0 929.5,63.0 929.5,63.0 928.5,63.0 928.5,62.5 924.5,62.5 924.5,63.0 921.5,63.0 921.5,62.5 916.5,62.5 916.5,63.5 911.5,63.5 911.5,62.5 910.5,62.5 910.5,63.5 906.5,63.5 906.5,63.5 904.5,63.5 904.5,63.5 903.5,63.5 903.5,63.0 901.5,63.0 901.5,63.5 898.5,63.5 898.5,63.0 894.5,63.0 894.5,63.5 893.5,63.5 893.5,63.5 890.5,63.5"/>
<rect x="901.00" y="62.89" width="1.20" height="3.50" fill="#f8f404"/>
<rect x="992.00" y="61.10" width="1.20" height="2.50" fill="#f8f404"/>
<rect x="968.00" y="54.93" width="1.20" height="3.00" fill="#f8f404"/>
<rect x="966.00" y="61.61" width="1.20" height="3.50" fill="#f8f404"/>
<rect x="972.00" y="55.78" width="1.20" height="2.00" fill="#f8f404"/>
<rect x="946.00" y="62.01" width="1.20" height="2.50" fill="#f8f404"/>
<rect x="917.00" y="62.58" width="1.20" height="3.50" fill="#f8f404"/>
<rect x="904.00" y="62.83" width="1.20" height="4.00" fill="#f8f404"/>
<rect x="913.00" y="62.66" width="1.20" height="3.50" fill="#f8f404"/>
<rect x="991.00" y="61.12" width="1.20" height="4.00" fill="#f8f404"/>
<rect x="908.00" y="62.76" width="1.20" height="2.50" fill="#f8f404"/>
<rect x="895.00" y="63.01" width="1.20" height="3.50" fill="#f8f404"/>
<rect x="898.00" y="62.95" width="1.20" height="3.50" fill="#f8f404"/>
<rect x="941.00" y="55.89" width="1.20" height="3.00" fill="#f8f404"/>
<rect x="971.00" y="55.82" width="1.20" height="2.00" fill="#f8f404"/>
<rect x="928.00" y="62.36" width="1.20" height="4.00" fill="#f8f404"/>
<rect x="973.00" y="61.48" width="1.20" height="4.00" fill="#f8f404"/>
<rect x="971.00" y="54.82" width="1.20" height="3.00" fill="#f8f404"/>
<rect x="940.00" y="62.13" width="1.20" height="2.50" fill="#f8f404"/>
<rect x="923.00" y="62.46" width="1.20" height="2.50" fill="#f8f404"/>
<rect x="953.00" y="55.46" width="1.20" height="3.00" fill="#f8f404"/>
<rect x="931.00" y="56.25" width="1.20" height="3.00" fill="#f8f404"/>
<rect x="902.00" y="62.87" width="1.20" height="2.50" fill="#f8f404"/>
<rect x="933.00" y="57.18" width="1.20" height="2.00" fill="#f8f404"/>
<polygon fill="#f8f404" points="41.0,228.5 43.0,228.5 43.0,228.5 48.0,228.5 48.0,228.0 49.0,228.0 49.0,228.5 52.0,228.5 52.0,229.0 57.0,229.0 57.0,228.5 60.0,228.5 60.0,228.5 63.0,228.5 63.0,228.0 66.0,228.0 66.0,228.0 67.0,228.0 67.0,227.5 69.0,227.5 69.0,228.0 70.0,228.0 70.0,228.0 72.0,228.0 72.0,233.0 67.0,233.0 67.0,232.5 63.0,232.5 63.0,232.5 58.0,232.5 58.0,233.0 56.0,233.0 56.0,233.0 54.0,233.0 54.0,233.5 49.0,233.5 49.0,233.5 47.0,233.5 47.0,233.0 43.0,233.0 43.0,233.0 41.0,233.0"/>
<polygon fill="#f8f404" points="301.0,228.0 302.0,228.0 302.0,227.5 304.0,227.5 304.0,227.0 307.0,227.0 307.0,228.0 310.0,228.0 310.0,228.0 313.0,228.0 313.0,227.5 315.0,227.5 315.0,227.5 318.0,227.5 318.0,227.5 321.0,227.5 321.0,228.0 322.0,228.0 322.0,227.5 327.0,227.5 327.0,228.0 332.0,228.0 332.0,227.5 332.5,227.5 332.5,232.0 331.0,232.0 331.0,232.0 328.0,232.0 328.0,232.0 323.0,232.0 323.0,232.0 320.0,232.0 320.0,232.0 318.0,232.0 318.0,231.5 315.0,231.5 315.0,232.0 311.0,232.0 311.0,232.0 307.0,232.0 307.0,231.5 305.0,231.5 305.0,232.0 303.0,232.0 303.0,232.0 301.0,232.0"/>
<polygon fill="#f8f404" points="559.5,228.0 561.5,228.0 561.5,228.0 562.5,228.0 562.5,228.0 564.5,228.0 564.5,228.0 565.5,228.0 565.5,228.0 566.5,228.0 566.5,227.5 569.5,227.5 569.5,228.0 572.5,228.0 572.5,228.0 574.5,228.0 574.5,228.0 577.5,228.0 577.5,227.5 581.5,227.5 581.5,227.5 583.5,227.5 583.5,228.5 587.5,228.5 587.5,228.5 592.5,228.5 592.5,228.5 593.0,228.5 593.0,234.0 590.5,234.0 590.5,234.5 589.5,234.5 589.5,234.5 587.5,234.5 587.5,234.0 583.5,234.0 583.5,233.5 581.5,233.5 581.5,233.5 580.5,233.5 580.5,233.5 578.5,233.5 578.5,233.5 576.5,233.5 576.5,233.5 574.5,233.5 574.5,233.5 572.5,233.5 572.5,233.5 569.5,233.5 569.5,233.5 567.5,233.5 567.5,234.0 565.5,234.0 565.5,233.5 563.5,233.5 563.5,233.5 561.5,233.5 561.5,233.5 559.5,233.5"/>
<polygon fill="#f8f404" points="821.0,227.0 822.0,227.0 822.0,227.5 825.0,227.5 825.0,228.0 827.0,228.0 827.0,227.5 830.0,227.5 830.0,227.5 831.0,227.5 831.0,227.5 833.0,227.5 833.0,227.5 834.0,227.5 834.0,228.0 838.0,228.0 838.0,227.5 842.0,227.5 842.0,227.5 843.0,227.5 843.0,228.0 847.0,228.0 847.0,227.5 849.0,227.5 849.0,227.5 853.0,227.5 853.0,233.0 852.0,233.0 852.0,232.5 851.0,232.5 851.0,232.5 849.0,232.5 849.0,233.5 844.0,233.5 844.0,233.0 843.0,233.0 843.0,233.0 841.0,233.0 841.0,233.0 839.0,233.0 839.0,233.0 837.0,233.0 837.0,233.0 835.0,233.0 835.0,233.0 831.0,233.0 831.0,233.5 827.0,233.5 827.0,233.5 826.0,233.5 826.0,233.0 821.0,233.0"/>
<rect x="292.50" y="226.80" width="2.50" height="6.80" fill="#f8f404"/>
<rect x="516.60" y="230.00" width="3.20" height="3.60" fill="#f8f404"/>
<rect x="552.40" y="228.20" width="2.60" height="5.40" fill="#f8f404"/>
<rect x="776.60" y="228.50" width="2.40" height="5.10" fill="#f8f404"/>
<rect x="811.30" y="227.20" width="4.50" height="6.40" fill="#f8f404"/>
<polygon fill="#f8f404" points="18.8,52.0 23.8,52.0 23.8,52.0 25.8,52.0 25.8,53.0 26.8,53.0 26.8,54.0 27.8,54.0 27.8,54.0 31.8,54.0 31.8,51.0 32.8,51.0 32.8,51.0 33.8,51.0 33.8,53.0 38.8,53.0 38.8,53.0 42.0,53.0 42.0,237.0 39.8,237.0 39.8,235.0 37.8,235.0 37.8,234.0 34.8,234.0 34.8,235.0 29.8,235.0 29.8,235.0 26.8,235.0 26.8,234.5 23.8,234.5 23.8,233.5 18.8,233.5"/>
<rect x="52.10" y="53.80" width="1.20" height="185.20" fill="#f8f404"/>
<rect x="70.20" y="228.00" width="1.20" height="25.00" fill="#f8f404"/>
<polygon fill="#f8f404" points="71.5,54.5 72.5,54.5 72.5,55.5 77.5,55.5 77.5,53.5 80.5,53.5 80.5,55.5 82.5,55.5 82.5,56.0 85.5,56.0 85.5,56.0 88.5,56.0 88.5,54.0 89.5,54.0 89.5,55.0 93.5,55.0 93.5,56.0 96.5,56.0 96.5,56.5 97.0,56.5 97.0,235.0 95.5,235.0 95.5,233.0 92.5,233.0 92.5,234.0 91.5,234.0 91.5,234.0 87.5,234.0 87.5,234.0 85.5,234.0 85.5,235.0 83.5,235.0 83.5,234.0 78.5,234.0 78.5,235.0 77.5,235.0 77.5,237.0 72.5,237.0 72.5,234.0 71.5,234.0"/>
<polygon fill="#f8f404" points="97.0,56.5 99.0,56.5 99.0,55.5 102.0,55.5 102.0,54.5 103.0,54.5 103.0,56.5 104.0,56.5 104.0,57.0 109.0,57.0 109.0,55.0 113.0,55.0 113.0,57.0 117.0,57.0 117.0,57.5 120.0,57.5 120.0,57.5 122.7,57.5 122.7,238.5 119.0,238.5 119.0,236.5 115.0,236.5 115.0,240.5 114.0,240.5 114.0,238.5 109.0,238.5 109.0,237.5 108.0,237.5 108.0,237.0 106.0,237.0 106.0,237.0 105.0,237.0 105.0,238.0 102.0,238.0 102.0,237.0 98.0,237.0 98.0,240.0 97.0,240.0"/>
<rect x="122.40" y="50.60" width="1.20" height="11.40" fill="#f8f404"/>
<rect x="256.40" y="57.00" width="1.50" height="174.50" fill="#f8f404"/>
<polygon fill="#f8f404" points="259.6,53.5 264.6,53.5 264.6,55.5 266.6,55.5 266.6,53.5 269.6,53.5 269.6,54.5 274.6,54.5 274.6,56.5 277.6,56.5 277.6,55.5 279.6,55.5 279.6,56.5 280.6,56.5 280.6,55.5 283.6,55.5 283.6,56.5 286.6,56.5 286.6,56.5 288.6,56.5 288.6,55.0 291.6,55.0 291.6,55.0 292.6,55.0 292.6,53.0 292.8,53.0 292.8,237.0 290.6,237.0 290.6,237.0 289.6,237.0 289.6,236.0 287.6,236.0 287.6,237.0 284.6,237.0 284.6,236.0 282.6,236.0 282.6,236.0 278.6,236.0 278.6,236.0 277.6,236.0 277.6,236.0 272.6,236.0 272.6,239.0 271.6,239.0 271.6,235.5 266.6,235.5 266.6,236.5 265.6,236.5 265.6,235.5 264.6,235.5 264.6,235.5 261.6,235.5 261.6,235.5 259.6,235.5"/>
<rect x="265.00" y="48.00" width="1.20" height="9.00" fill="#f8f404"/>
<polygon fill="#f8f404" points="294.7,53.5 296.7,53.5 296.7,53.5 300.7,53.5 300.7,55.0 302.0,55.0 302.0,233.5 298.7,233.5 298.7,234.0 296.7,234.0 296.7,232.0 294.7,232.0"/>
<rect x="292.80" y="54.80" width="1.90" height="1.70" fill="#f8f404"/>
<rect x="312.10" y="61.00" width="1.80" height="171.00" fill="#f8f404"/>
<polygon fill="#f8f404" points="331.8,53.5 333.8,53.5 333.8,54.5 334.8,54.5 334.8,53.0 336.8,53.0 336.8,54.0 338.8,54.0 338.8,54.0 343.8,54.0 343.8,55.0 346.8,55.0 346.8,55.0 348.8,55.0 348.8,55.5 352.0,55.5 352.0,235.5 350.8,235.5 350.8,234.5 348.8,234.5 348.8,237.0 346.8,237.0 346.8,235.0 341.8,235.0 341.8,236.5 339.8,236.5 339.8,233.5 336.8,233.5 336.8,234.0 331.8,234.0"/>
<polygon fill="#f8f404" points="352.0,56.5 353.0,56.5 353.0,55.5 355.0,55.5 355.0,56.0 359.0,56.0 359.0,55.0 361.0,55.0 361.0,55.5 363.0,55.5 363.0,56.5 368.0,56.5 368.0,57.0 373.0,57.0 373.0,57.5 375.0,57.5 375.0,55.5 377.0,55.5 377.0,57.0 380.0,57.0 380.0,58.0 380.2,58.0 380.2,237.0 380.0,237.0 380.0,239.0 378.0,239.0 378.0,238.0 374.0,238.0 374.0,238.5 371.0,238.5 371.0,237.0 367.0,237.0 367.0,237.5 363.0,237.5 363.0,236.5 361.0,236.5 361.0,237.5 360.0,237.5 360.0,236.0 359.0,236.0 359.0,236.0 355.0,236.0 355.0,235.5 352.0,235.5"/>
<rect x="512.80" y="56.00" width="4.10" height="177.50" fill="#f8f404"/>
<rect x="516.90" y="55.00" width="2.60" height="6.00" fill="#f8f404"/>
<polygon fill="#f8f404" points="519.5,55.0 521.5,55.0 521.5,55.0 522.5,55.0 522.5,55.0 527.5,55.0 527.5,55.0 530.5,55.0 530.5,55.0 531.5,55.0 531.5,54.0 536.5,54.0 536.5,54.0 539.5,54.0 539.5,55.0 540.5,55.0 540.5,54.0 545.5,54.0 545.5,56.0 549.5,56.0 549.5,56.0 552.7,56.0 552.7,234.5 548.5,234.5 548.5,235.0 543.5,235.0 543.5,236.0 542.5,236.0 542.5,236.0 538.5,236.0 538.5,235.0 534.5,235.0 534.5,238.0 532.5,238.0 532.5,238.0 530.5,238.0 530.5,235.0 529.5,235.0 529.5,235.0 528.5,235.0 528.5,235.0 526.5,235.0 526.5,234.5 523.5,234.5 523.5,234.5 522.5,234.5 522.5,234.5 521.5,234.5 521.5,234.5 519.5,234.5"/>
<rect x="552.70" y="54.80" width="2.00" height="2.20" fill="#f8f404"/>
<polygon fill="#f8f404" points="554.7,55.0 559.7,55.0 559.7,53.0 560.2,53.0 560.2,232.5 559.7,232.5 559.7,232.5 554.7,232.5"/>
<polygon fill="#f8f404" points="591.4,54.5 593.4,54.5 593.4,53.5 594.4,53.5 594.4,54.5 596.4,54.5 596.4,54.0 597.4,54.0 597.4,54.0 602.4,54.0 602.4,55.5 607.4,55.5 607.4,53.5 609.4,53.5 609.4,55.0 614.4,55.0 614.4,56.0 616.4,56.0 616.4,56.5 617.4,56.5 617.4,55.5 619.4,55.5 619.4,56.5 620.0,56.5 620.0,236.5 619.4,236.5 619.4,236.5 615.4,236.5 615.4,239.0 613.4,239.0 613.4,237.0 609.4,237.0 609.4,236.0 604.4,236.0 604.4,238.5 603.4,238.5 603.4,235.5 600.4,235.5 600.4,234.5 597.4,234.5 597.4,235.5 595.4,235.5 595.4,238.0 593.4,238.0 593.4,236.0 591.4,236.0"/>
<polygon fill="#f8f404" points="620.0,57.0 622.0,57.0 622.0,57.0 623.0,57.0 623.0,57.5 624.0,57.5 624.0,57.5 626.0,57.5 626.0,58.5 631.0,58.5 631.0,59.0 632.0,59.0 632.0,59.0 634.0,59.0 634.0,59.5 634.8,59.5 634.8,239.0 634.0,239.0 634.0,239.0 633.0,239.0 633.0,241.5 628.0,241.5 628.0,238.0 626.0,238.0 626.0,239.0 625.0,239.0 625.0,238.0 620.0,238.0"/>
<rect x="772.20" y="56.50" width="4.70" height="176.90" fill="#f8f404"/>
<rect x="776.90" y="56.00" width="1.90" height="8.00" fill="#f8f404"/>
<polygon fill="#f8f404" points="778.8,55.0 779.8,55.0 779.8,55.0 780.8,55.0 780.8,53.5 785.8,53.5 785.8,54.5 788.8,54.5 788.8,54.5 790.8,54.5 790.8,54.5 795.8,54.5 795.8,53.5 797.8,53.5 797.8,52.5 799.8,52.5 799.8,54.5 801.8,54.5 801.8,53.5 803.8,53.5 803.8,54.5 805.8,54.5 805.8,53.5 810.8,53.5 810.8,55.5 811.6,55.5 811.6,234.0 809.8,234.0 809.8,234.0 808.8,234.0 808.8,237.0 806.8,237.0 806.8,234.5 802.8,234.5 802.8,233.5 797.8,233.5 797.8,233.5 793.8,233.5 793.8,233.5 788.8,233.5 788.8,232.5 786.8,232.5 786.8,233.5 783.8,233.5 783.8,233.5 780.8,233.5 780.8,233.5 778.8,233.5"/>
<polygon fill="#f8f404" points="815.5,53.0 816.5,53.0 816.5,54.0 819.5,54.0 819.5,54.0 822.2,54.0 822.2,234.5 818.5,234.5 818.5,234.0 815.5,234.0"/>
<rect x="820.40" y="40.60" width="1.60" height="15.40" fill="#f8f404"/>
<polygon fill="#f8f404" points="852.5,53.5 856.5,53.5 856.5,53.5 858.5,53.5 858.5,54.0 863.5,54.0 863.5,54.0 866.0,54.0 866.0,237.5 863.5,237.5 863.5,234.5 861.5,234.5 861.5,235.0 856.5,235.0 856.5,233.5 853.5,233.5 853.5,233.5 852.5,233.5"/>
<polygon fill="#f8f404" points="866.0,56.0 871.0,56.0 871.0,56.5 874.0,56.5 874.0,57.0 876.0,57.0 876.0,56.0 878.0,56.0 878.0,57.5 881.0,57.5 881.0,58.0 884.0,58.0 884.0,58.5 887.0,58.5 887.0,59.5 891.0,59.5 891.0,239.0 889.0,239.0 889.0,238.5 886.0,238.5 886.0,239.0 884.0,239.0 884.0,237.5 880.0,237.5 880.0,238.0 877.0,238.0 877.0,236.0 875.0,236.0 875.0,237.5 872.0,237.5 872.0,236.0 868.0,236.0 868.0,236.5 866.0,236.5"/>
<polygon fill="#f8f404" points="870.5,56.5 873.3,50.8 876.0,56.5"/>
<polygon fill="#04f008" points="122.5,312.0 124.5,312.0 124.5,312.5 129.5,312.5 129.5,312.0 133.5,312.0 133.5,312.0 138.5,312.0 138.5,311.0 140.5,311.0 140.5,311.5 142.5,311.5 142.5,311.5 146.5,311.5 146.5,311.5 148.5,311.5 148.5,311.5 150.5,311.5 150.5,311.0 152.5,311.0 152.5,311.5 153.5,311.5 153.5,311.0 158.5,311.0 158.5,311.0 160.5,311.0 160.5,311.0 162.5,311.0 162.5,310.5 164.5,310.5 164.5,311.0 166.5,311.0 166.5,311.0 168.5,311.0 168.5,310.5 169.5,310.5 169.5,311.0 170.5,311.0 170.5,310.5 172.5,310.5 172.5,310.5 175.5,310.5 175.5,310.5 176.5,310.5 176.5,310.0 179.5,310.0 179.5,310.5 181.5,310.5 181.5,310.5 186.5,310.5 186.5,310.0 189.5,310.0 189.5,310.0 191.5,310.0 191.5,309.5 195.5,309.5 195.5,310.0 198.5,310.0 198.5,310.0 203.5,310.0 203.5,309.0 206.5,309.0 206.5,309.5 210.5,309.5 210.5,309.0 215.5,309.0 215.5,310.0 218.5,310.0 218.5,308.5 220.5,308.5 220.5,308.5 225.5,308.5 225.5,308.5 230.5,308.5 230.5,309.5 234.5,309.5 234.5,308.5 236.5,308.5 236.5,308.0 238.5,308.0 238.5,308.5 239.5,308.5 239.5,308.5 242.5,308.5 242.5,308.0 244.5,308.0 244.5,308.5 249.5,308.5 249.5,308.5 252.5,308.5 252.5,307.5 255.5,307.5 255.5,307.5 257.0,307.5 257.0,312.5 256.5,312.5 256.5,312.5 253.5,312.5 253.5,312.0 248.5,312.0 248.5,312.0 247.5,312.0 247.5,312.0 245.5,312.0 245.5,312.5 243.5,312.5 243.5,312.5 240.5,312.5 240.5,312.5 236.5,312.5 236.5,312.5 231.5,312.5 231.5,312.5 229.5,312.5 229.5,312.5 227.5,312.5 227.5,312.5 225.5,312.5 225.5,313.0 220.5,313.0 220.5,313.5 217.5,313.5 217.5,313.0 216.5,313.0 216.5,313.0 215.5,313.0 215.5,313.0 212.5,313.0 212.5,313.0 210.5,313.0 210.5,313.0 205.5,313.0 205.5,313.0 201.5,313.0 201.5,313.5 200.5,313.5 200.5,312.5 196.5,312.5 196.5,313.0 194.5,313.0 194.5,314.0 192.5,314.0 192.5,313.5 187.5,313.5 187.5,313.5 185.5,313.5 185.5,313.5 183.5,313.5 183.5,313.0 178.5,313.0 178.5,313.5 174.5,313.5 174.5,313.5 169.5,313.5 169.5,314.0 165.5,314.0 165.5,314.0 161.5,314.0 161.5,314.0 159.5,314.0 159.5,314.0 157.5,314.0 157.5,314.5 155.5,314.5 155.5,314.0 151.5,314.0 151.5,314.0 150.5,314.0 150.5,314.0 147.5,314.0 147.5,314.0 146.5,314.0 146.5,313.5 144.5,313.5 144.5,314.5 142.5,314.5 142.5,315.0 137.5,315.0 137.5,314.5 134.5,314.5 134.5,314.0 130.5,314.0 130.5,314.5 127.5,314.5 127.5,314.5 124.5,314.5 124.5,314.5 122.5,314.5"/>
<rect x="154.00" y="309.24" width="1.20" height="2.50" fill="#04f008"/>
<rect x="211.00" y="307.50" width="1.20" height="2.50" fill="#04f008"/>
<rect x="186.00" y="312.92" width="1.20" height="3.30" fill="#04f008"/>
<rect x="209.00" y="307.56" width="1.20" height="2.50" fill="#04f008"/>
<rect x="171.00" y="308.72" width="1.20" height="2.50" fill="#04f008"/>
<rect x="216.00" y="307.35" width="1.20" height="2.50" fill="#04f008"/>
<rect x="213.00" y="307.04" width="1.20" height="2.90" fill="#04f008"/>
<rect x="229.00" y="306.55" width="1.20" height="2.90" fill="#04f008"/>
<rect x="164.00" y="313.33" width="1.20" height="2.90" fill="#04f008"/>
<rect x="206.00" y="312.55" width="1.20" height="2.90" fill="#04f008"/>
<rect x="144.00" y="313.70" width="1.20" height="2.90" fill="#04f008"/>
<rect x="132.00" y="309.91" width="1.20" height="2.50" fill="#04f008"/>
<rect x="227.00" y="312.16" width="1.20" height="2.90" fill="#04f008"/>
<rect x="207.00" y="312.53" width="1.20" height="2.10" fill="#04f008"/>
<rect x="152.00" y="313.55" width="1.20" height="2.90" fill="#04f008"/>
<rect x="157.00" y="313.46" width="1.20" height="2.10" fill="#04f008"/>
<rect x="236.00" y="311.99" width="1.20" height="2.90" fill="#04f008"/>
<rect x="170.00" y="313.22" width="1.20" height="2.90" fill="#04f008"/>
<rect x="228.00" y="312.14" width="1.20" height="3.30" fill="#04f008"/>
<rect x="204.00" y="307.32" width="1.20" height="2.90" fill="#04f008"/>
<rect x="242.00" y="306.16" width="1.20" height="2.90" fill="#04f008"/>
<rect x="234.00" y="312.03" width="1.20" height="3.30" fill="#04f008"/>
<rect x="152.00" y="313.55" width="1.20" height="2.90" fill="#04f008"/>
<rect x="212.00" y="312.44" width="1.20" height="2.10" fill="#04f008"/>
<rect x="159.00" y="313.42" width="1.20" height="2.10" fill="#04f008"/>
<rect x="186.00" y="308.26" width="1.20" height="2.50" fill="#04f008"/>
<rect x="185.00" y="312.94" width="1.20" height="2.90" fill="#04f008"/>
<rect x="157.00" y="313.46" width="1.20" height="3.30" fill="#04f008"/>
<rect x="237.00" y="311.97" width="1.20" height="2.90" fill="#04f008"/>
<polygon fill="#04f008" points="380.0,312.5 383.0,312.5 383.0,313.0 387.0,313.0 387.0,312.5 392.0,312.5 392.0,312.5 395.0,312.5 395.0,312.5 398.0,312.5 398.0,312.0 403.0,312.0 403.0,311.5 405.0,311.5 405.0,311.5 407.0,311.5 407.0,312.0 412.0,312.0 412.0,311.5 413.0,311.5 413.0,311.0 414.0,311.0 414.0,311.5 419.0,311.5 419.0,311.5 420.0,311.5 420.0,311.5 423.0,311.5 423.0,311.0 425.0,311.0 425.0,310.5 427.0,310.5 427.0,310.5 430.0,310.5 430.0,311.0 432.0,311.0 432.0,311.5 433.0,311.5 433.0,311.0 438.0,311.0 438.0,310.5 440.0,310.5 440.0,310.5 444.0,310.5 444.0,310.5 446.0,310.5 446.0,310.5 449.0,310.5 449.0,310.0 452.0,310.0 452.0,310.0 456.0,310.0 456.0,310.0 458.0,310.0 458.0,310.5 460.0,310.5 460.0,309.5 463.0,309.5 463.0,309.5 465.0,309.5 465.0,310.0 467.0,310.0 467.0,309.5 471.0,309.5 471.0,309.0 473.0,309.0 473.0,309.5 476.0,309.5 476.0,309.0 477.0,309.0 477.0,309.0 479.0,309.0 479.0,309.0 484.0,309.0 484.0,309.0 486.0,309.0 486.0,308.5 491.0,308.5 491.0,308.5 492.0,308.5 492.0,308.5 497.0,308.5 497.0,308.0 500.0,308.0 500.0,308.0 504.0,308.0 504.0,308.0 507.0,308.0 507.0,308.0 508.0,308.0 508.0,308.0 509.0,308.0 509.0,307.5 512.0,307.5 512.0,307.5 513.5,307.5 513.5,311.5 512.0,311.5 512.0,312.0 510.0,312.0 510.0,311.5 507.0,311.5 507.0,312.0 506.0,312.0 506.0,312.0 505.0,312.0 505.0,312.0 500.0,312.0 500.0,312.5 499.0,312.5 499.0,312.0 496.0,312.0 496.0,312.0 491.0,312.0 491.0,312.5 489.0,312.5 489.0,312.5 484.0,312.5 484.0,312.5 483.0,312.5 483.0,312.5 480.0,312.5 480.0,312.5 478.0,312.5 478.0,313.0 474.0,313.0 474.0,313.0 471.0,313.0 471.0,313.5 470.0,313.5 470.0,313.0 467.0,313.0 467.0,313.0 462.0,313.0 462.0,313.0 459.0,313.0 459.0,312.5 458.0,312.5 458.0,312.5 457.0,312.5 457.0,313.5 453.0,313.5 453.0,313.5 452.0,313.5 452.0,313.5 447.0,313.5 447.0,313.5 444.0,313.5 444.0,313.5 442.0,313.5 442.0,313.5 439.0,313.5 439.0,313.5 437.0,313.5 437.0,314.0 432.0,314.0 432.0,314.0 430.0,314.0 430.0,313.5 428.0,313.5 428.0,314.0 427.0,314.0 427.0,314.5 426.0,314.5 426.0,314.0 425.0,314.0 425.0,314.0 420.0,314.0 420.0,314.5 418.0,314.5 418.0,314.0 413.0,314.0 413.0,314.5 408.0,314.5 408.0,315.0 407.0,315.0 407.0,314.5 406.0,314.5 406.0,315.0 402.0,315.0 402.0,315.5 397.0,315.5 397.0,315.5 392.0,315.5 392.0,315.0 388.0,315.0 388.0,315.0 384.0,315.0 384.0,315.5 380.0,315.5"/>
<rect x="440.00" y="313.19" width="1.20" height="2.10" fill="#04f008"/>
<rect x="429.00" y="313.51" width="1.20" height="3.30" fill="#04f008"/>
<rect x="493.00" y="307.23" width="1.20" height="1.70" fill="#04f008"/>
<rect x="420.00" y="313.76" width="1.20" height="2.90" fill="#04f008"/>
<rect x="442.00" y="308.49" width="1.20" height="2.50" fill="#04f008"/>
<rect x="500.00" y="311.48" width="1.20" height="2.10" fill="#04f008"/>
<rect x="383.00" y="314.81" width="1.20" height="3.30" fill="#04f008"/>
<rect x="471.00" y="307.32" width="1.20" height="2.50" fill="#04f008"/>
<rect x="422.00" y="313.70" width="1.20" height="2.10" fill="#04f008"/>
<rect x="506.00" y="305.50" width="1.20" height="2.90" fill="#04f008"/>
<rect x="390.00" y="314.62" width="1.20" height="3.30" fill="#04f008"/>
<rect x="476.00" y="307.92" width="1.20" height="1.70" fill="#04f008"/>
<rect x="401.00" y="310.15" width="1.20" height="2.50" fill="#04f008"/>
<rect x="506.00" y="311.31" width="1.20" height="2.90" fill="#04f008"/>
<rect x="444.00" y="308.41" width="1.20" height="2.50" fill="#04f008"/>
<rect x="504.00" y="305.58" width="1.20" height="2.90" fill="#04f008"/>
<rect x="425.00" y="313.62" width="1.20" height="3.30" fill="#04f008"/>
<rect x="508.00" y="305.42" width="1.20" height="2.90" fill="#04f008"/>
<rect x="425.00" y="313.62" width="1.20" height="2.10" fill="#04f008"/>
<rect x="490.00" y="306.55" width="1.20" height="2.50" fill="#04f008"/>
<rect x="458.00" y="308.64" width="1.20" height="1.70" fill="#04f008"/>
<rect x="431.00" y="313.45" width="1.20" height="3.30" fill="#04f008"/>
<rect x="482.00" y="312.00" width="1.20" height="2.90" fill="#04f008"/>
<rect x="419.00" y="313.79" width="1.20" height="2.90" fill="#04f008"/>
<rect x="417.00" y="313.85" width="1.20" height="2.10" fill="#04f008"/>
<rect x="419.00" y="313.79" width="1.20" height="3.30" fill="#04f008"/>
<rect x="401.00" y="309.75" width="1.20" height="2.90" fill="#04f008"/>
<rect x="471.00" y="307.32" width="1.20" height="2.50" fill="#04f008"/>
<rect x="451.00" y="308.13" width="1.20" height="2.50" fill="#04f008"/>
<polygon fill="#04f008" points="634.5,312.0 637.5,312.0 637.5,312.0 642.5,312.0 642.5,312.0 644.5,312.0 644.5,311.5 645.5,311.5 645.5,312.0 648.5,312.0 648.5,311.5 653.5,311.5 653.5,311.5 655.5,311.5 655.5,312.0 656.5,312.0 656.5,311.5 659.5,311.5 659.5,311.5 663.5,311.5 663.5,312.0 667.5,312.0 667.5,311.5 669.5,311.5 669.5,311.0 670.5,311.0 670.5,311.0 673.5,311.0 673.5,311.0 677.5,311.0 677.5,311.0 681.5,311.0 681.5,311.0 684.5,311.0 684.5,310.5 688.5,310.5 688.5,310.5 690.5,310.5 690.5,310.5 692.5,310.5 692.5,311.0 694.5,311.0 694.5,310.5 699.5,310.5 699.5,310.5 701.5,310.5 701.5,310.0 705.5,310.0 705.5,310.5 708.5,310.5 708.5,310.5 712.5,310.5 712.5,310.0 714.5,310.0 714.5,310.0 715.5,310.0 715.5,310.5 717.5,310.5 717.5,310.0 718.5,310.0 718.5,309.5 723.5,309.5 723.5,309.5 724.5,309.5 724.5,309.5 726.5,309.5 726.5,309.5 727.5,309.5 727.5,309.5 729.5,309.5 729.5,309.5 733.5,309.5 733.5,309.5 734.5,309.5 734.5,310.0 736.5,310.0 736.5,309.0 740.5,309.0 740.5,309.0 744.5,309.0 744.5,309.0 746.5,309.0 746.5,309.0 748.5,309.0 748.5,309.0 749.5,309.0 749.5,309.5 753.5,309.5 753.5,308.5 757.5,308.5 757.5,309.0 759.5,309.0 759.5,308.5 760.5,308.5 760.5,308.5 762.5,308.5 762.5,308.5 765.5,308.5 765.5,308.5 766.5,308.5 766.5,308.5 767.5,308.5 767.5,309.0 769.5,309.0 769.5,308.0 774.5,308.0 774.5,308.5 777.5,308.5 777.5,308.5 778.5,308.5 778.5,307.5 779.0,307.5 779.0,312.0 776.5,312.0 776.5,312.0 774.5,312.0 774.5,312.0 772.5,312.0 772.5,312.0 769.5,312.0 769.5,312.5 767.5,312.5 767.5,312.5 762.5,312.5 762.5,312.5 760.5,312.5 760.5,312.5 758.5,312.5 758.5,313.0 757.5,313.0 757.5,312.5 755.5,312.5 755.5,312.5 753.5,312.5 753.5,312.5 752.5,312.5 752.5,313.0 751.5,313.0 751.5,312.0 748.5,312.0 748.5,312.5 745.5,312.5 745.5,312.0 743.5,312.0 743.5,313.0 741.5,313.0 741.5,312.0 737.5,312.0 737.5,313.0 735.5,313.0 735.5,313.0 734.5,313.0 734.5,313.0 729.5,313.0 729.5,313.0 728.5,313.0 728.5,313.5 726.5,313.5 726.5,313.0 723.5,313.0 723.5,313.0 720.5,313.0 720.5,313.0 718.5,313.0 718.5,313.0 715.5,313.0 715.5,313.0 713.5,313.0 713.5,313.0 710.5,313.0 710.5,313.5 705.5,313.5 705.5,313.5 701.5,313.5 701.5,313.5 699.5,313.5 699.5,314.0 694.5,314.0 694.5,313.5 693.5,313.5 693.5,313.0 691.5,313.0 691.5,313.5 690.5,313.5 690.5,313.5 687.5,313.5 687.5,314.0 682.5,314.0 682.5,314.5 678.5,314.5 678.5,314.0 677.5,314.0 677.5,314.0 673.5,314.0 673.5,314.0 671.5,314.0 671.5,314.0 670.5,314.0 670.5,314.0 668.5,314.0 668.5,314.5 666.5,314.5 666.5,314.0 664.5,314.0 664.5,313.5 661.5,313.5 661.5,314.0 658.5,314.0 658.5,314.0 653.5,314.0 653.5,314.5 648.5,314.5 648.5,314.5 644.5,314.5 644.5,314.5 642.5,314.5 642.5,314.5 637.5,314.5 637.5,314.5 634.5,314.5"/>
<rect x="671.00" y="313.44" width="1.20" height="3.30" fill="#04f008"/>
<rect x="754.00" y="307.53" width="1.20" height="1.70" fill="#04f008"/>
<rect x="673.00" y="313.41" width="1.20" height="2.90" fill="#04f008"/>
<rect x="763.00" y="311.79" width="1.20" height="3.30" fill="#04f008"/>
<rect x="644.00" y="309.52" width="1.20" height="2.90" fill="#04f008"/>
<rect x="766.00" y="306.38" width="1.20" height="2.50" fill="#04f008"/>
<rect x="653.00" y="309.66" width="1.20" height="2.50" fill="#04f008"/>
<rect x="697.00" y="312.98" width="1.20" height="2.10" fill="#04f008"/>
<rect x="766.00" y="311.73" width="1.20" height="2.90" fill="#04f008"/>
<rect x="695.00" y="313.01" width="1.20" height="3.30" fill="#04f008"/>
<rect x="774.00" y="311.59" width="1.20" height="3.30" fill="#04f008"/>
<rect x="639.00" y="310.07" width="1.20" height="2.50" fill="#04f008"/>
<rect x="708.00" y="307.66" width="1.20" height="2.90" fill="#04f008"/>
<rect x="677.00" y="313.34" width="1.20" height="2.10" fill="#04f008"/>
<rect x="765.00" y="311.75" width="1.20" height="3.30" fill="#04f008"/>
<rect x="662.00" y="309.00" width="1.20" height="2.90" fill="#04f008"/>
<rect x="745.00" y="307.79" width="1.20" height="1.70" fill="#04f008"/>
<rect x="721.00" y="307.29" width="1.20" height="2.90" fill="#04f008"/>
<rect x="739.00" y="307.96" width="1.20" height="1.70" fill="#04f008"/>
<rect x="665.00" y="313.55" width="1.20" height="3.30" fill="#04f008"/>
<rect x="725.00" y="312.47" width="1.20" height="2.90" fill="#04f008"/>
<rect x="665.00" y="313.55" width="1.20" height="3.30" fill="#04f008"/>
<rect x="709.00" y="308.83" width="1.20" height="1.70" fill="#04f008"/>
<rect x="709.00" y="308.03" width="1.20" height="2.50" fill="#04f008"/>
<rect x="755.00" y="306.70" width="1.20" height="2.50" fill="#04f008"/>
<rect x="649.00" y="313.84" width="1.20" height="2.90" fill="#04f008"/>
<rect x="655.00" y="313.73" width="1.20" height="2.10" fill="#04f008"/>
<rect x="663.00" y="309.37" width="1.20" height="2.50" fill="#04f008"/>
<rect x="642.00" y="313.97" width="1.20" height="3.30" fill="#04f008"/>
<rect x="720.00" y="312.56" width="1.20" height="3.30" fill="#04f008"/>
<rect x="767.00" y="307.15" width="1.20" height="1.70" fill="#04f008"/>
<rect x="653.00" y="313.77" width="1.20" height="2.90" fill="#04f008"/>
<polygon fill="#04f008" points="890.5,312.5 895.5,312.5 895.5,312.0 898.5,312.0 898.5,312.0 899.5,312.0 899.5,311.5 900.5,311.5 900.5,312.0 903.5,312.0 903.5,311.5 907.5,311.5 907.5,312.0 911.5,312.0 911.5,311.5 915.5,311.5 915.5,311.5 916.5,311.5 916.5,311.5 917.5,311.5 917.5,311.0 921.5,311.0 921.5,311.0 923.5,311.0 923.5,311.0 925.5,311.0 925.5,311.5 929.5,311.5 929.5,311.0 930.5,311.0 930.5,310.5 931.5,310.5 931.5,310.5 936.5,310.5 936.5,310.5 938.5,310.5 938.5,310.0 942.5,310.0 942.5,310.5 946.5,310.5 946.5,310.0 950.5,310.0 950.5,310.0 955.5,310.0 955.5,310.0 956.5,310.0 956.5,309.5 957.5,309.5 957.5,310.0 959.5,310.0 959.5,309.5 961.5,309.5 961.5,309.5 964.5,309.5 964.5,309.5 968.5,309.5 968.5,309.5 970.5,309.5 970.5,309.5 971.5,309.5 971.5,309.0 974.5,309.0 974.5,309.0 978.5,309.0 978.5,309.5 980.5,309.5 980.5,309.0 982.5,309.0 982.5,309.0 987.5,309.0 987.5,308.0 990.5,308.0 990.5,308.5 993.5,308.5 993.5,308.0 994.5,308.0 994.5,308.0 997.5,308.0 997.5,308.5 1000.5,308.5 1000.5,308.0 1002.3,308.0 1002.3,312.0 999.5,312.0 999.5,312.5 995.5,312.5 995.5,312.5 992.5,312.5 992.5,312.5 990.5,312.5 990.5,312.5 986.5,312.5 986.5,312.5 985.5,312.5 985.5,312.5 980.5,312.5 980.5,312.5 978.5,312.5 978.5,312.5 976.5,312.5 976.5,313.0 974.5,313.0 974.5,313.0 973.5,313.0 973.5,313.0 972.5,313.0 972.5,313.0 971.5,313.0 971.5,313.0 970.5,313.0 970.5,313.0 965.5,313.0 965.5,313.0 961.5,313.0 961.5,313.5 959.5,313.5 959.5,313.0 954.5,313.0 954.5,313.0 953.5,313.0 953.5,313.0 952.5,313.0 952.5,314.0 949.5,314.0 949.5,313.0 946.5,313.0 946.5,313.5 944.5,313.5 944.5,313.5 943.5,313.5 943.5,314.0 939.5,314.0 939.5,313.5 936.5,313.5 936.5,313.5 935.5,313.5 935.5,313.5 931.5,313.5 931.5,313.5 929.5,313.5 929.5,314.0 924.5,314.0 924.5,314.5 921.5,314.5 921.5,314.0 919.5,314.0 919.5,314.5 917.5,314.5 917.5,314.0 915.5,314.0 915.5,314.0 911.5,314.0 911.5,313.5 908.5,313.5 908.5,313.5 906.5,313.5 906.5,314.0 902.5,314.0 902.5,314.0 899.5,314.0 899.5,315.0 897.5,315.0 897.5,314.5 894.5,314.5 894.5,314.5 892.5,314.5 892.5,314.0 891.5,314.0 891.5,314.5 890.5,314.5"/>
<rect x="948.00" y="308.14" width="1.20" height="2.50" fill="#04f008"/>
<rect x="955.00" y="312.72" width="1.20" height="3.30" fill="#04f008"/>
<rect x="902.00" y="313.85" width="1.20" height="2.90" fill="#04f008"/>
<rect x="958.00" y="307.38" width="1.20" height="2.90" fill="#04f008"/>
<rect x="934.00" y="313.17" width="1.20" height="2.90" fill="#04f008"/>
<rect x="942.00" y="307.96" width="1.20" height="2.90" fill="#04f008"/>
<rect x="944.00" y="309.09" width="1.20" height="1.70" fill="#04f008"/>
<rect x="919.00" y="313.49" width="1.20" height="3.30" fill="#04f008"/>
<rect x="951.00" y="308.04" width="1.20" height="2.50" fill="#04f008"/>
<rect x="894.00" y="314.02" width="1.20" height="2.10" fill="#04f008"/>
<rect x="927.00" y="313.32" width="1.20" height="2.90" fill="#04f008"/>
<rect x="923.00" y="309.04" width="1.20" height="2.50" fill="#04f008"/>
<rect x="899.00" y="313.92" width="1.20" height="3.30" fill="#04f008"/>
<rect x="900.00" y="309.86" width="1.20" height="2.50" fill="#04f008"/>
<rect x="963.00" y="307.61" width="1.20" height="2.50" fill="#04f008"/>
<rect x="931.00" y="308.35" width="1.20" height="2.90" fill="#04f008"/>
<rect x="917.00" y="308.85" width="1.20" height="2.90" fill="#04f008"/>
<rect x="993.00" y="306.13" width="1.20" height="2.90" fill="#04f008"/>
<rect x="930.00" y="313.25" width="1.20" height="3.30" fill="#04f008"/>
<rect x="958.00" y="312.65" width="1.20" height="3.30" fill="#04f008"/>
<rect x="903.00" y="309.75" width="1.20" height="2.50" fill="#04f008"/>
<rect x="921.00" y="313.45" width="1.20" height="3.30" fill="#04f008"/>
<rect x="991.00" y="311.94" width="1.20" height="2.10" fill="#04f008"/>
<rect x="893.00" y="309.71" width="1.20" height="2.90" fill="#04f008"/>
<polygon fill="#04f008" points="41.0,481.5 42.0,481.5 42.0,481.5 45.0,481.5 45.0,481.5 47.0,481.5 47.0,482.0 49.0,482.0 49.0,481.0 53.0,481.0 53.0,481.0 54.0,481.0 54.0,480.5 57.0,480.5 57.0,481.0 60.0,481.0 60.0,481.0 65.0,481.0 65.0,481.0 67.0,481.0 67.0,481.0 70.0,481.0 70.0,481.0 72.0,481.0 72.0,485.0 71.0,485.0 71.0,485.5 67.0,485.5 67.0,485.5 63.0,485.5 63.0,486.0 61.0,486.0 61.0,485.5 59.0,485.5 59.0,486.0 57.0,486.0 57.0,486.0 54.0,486.0 54.0,486.0 51.0,486.0 51.0,485.5 46.0,485.5 46.0,486.0 44.0,486.0 44.0,486.5 41.0,486.5"/>
<polygon fill="#04f008" points="301.0,480.5 303.0,480.5 303.0,481.0 307.0,481.0 307.0,480.5 309.0,480.5 309.0,480.5 311.0,480.5 311.0,480.5 312.0,480.5 312.0,480.5 313.0,480.5 313.0,480.5 317.0,480.5 317.0,480.5 319.0,480.5 319.0,480.5 321.0,480.5 321.0,480.5 325.0,480.5 325.0,481.0 329.0,481.0 329.0,480.0 332.5,480.0 332.5,485.0 328.0,485.0 328.0,485.0 324.0,485.0 324.0,485.0 321.0,485.0 321.0,485.0 319.0,485.0 319.0,485.0 318.0,485.0 318.0,485.5 317.0,485.5 317.0,485.0 315.0,485.0 315.0,485.5 311.0,485.5 311.0,485.0 309.0,485.0 309.0,485.0 306.0,485.0 306.0,485.0 301.0,485.0"/>
<polygon fill="#04f008" points="559.5,481.0 563.5,481.0 563.5,481.0 565.5,481.0 565.5,481.0 568.5,481.0 568.5,481.5 571.5,481.5 571.5,481.0 575.5,481.0 575.5,480.5 577.5,480.5 577.5,480.5 581.5,480.5 581.5,481.0 582.5,481.0 582.5,481.0 584.5,481.0 584.5,481.0 586.5,481.0 586.5,481.0 588.5,481.0 588.5,481.0 590.5,481.0 590.5,481.0 593.0,481.0 593.0,486.5 589.5,486.5 589.5,487.0 588.5,487.0 588.5,486.5 585.5,486.5 585.5,486.5 581.5,486.5 581.5,486.5 577.5,486.5 577.5,486.5 573.5,486.5 573.5,486.5 568.5,486.5 568.5,486.5 564.5,486.5 564.5,486.5 559.5,486.5"/>
<polygon fill="#04f008" points="821.0,480.0 822.0,480.0 822.0,479.5 826.0,479.5 826.0,479.5 831.0,479.5 831.0,479.5 832.0,479.5 832.0,480.5 835.0,480.5 835.0,480.5 836.0,480.5 836.0,480.0 841.0,480.0 841.0,480.5 845.0,480.5 845.0,480.5 847.0,480.5 847.0,480.5 848.0,480.5 848.0,480.0 849.0,480.0 849.0,480.5 850.0,480.5 850.0,480.5 852.0,480.5 852.0,480.5 853.0,480.5 853.0,486.0 852.0,486.0 852.0,486.0 848.0,486.0 848.0,486.0 847.0,486.0 847.0,486.0 846.0,486.0 846.0,486.0 842.0,486.0 842.0,486.0 840.0,486.0 840.0,486.0 839.0,486.0 839.0,486.0 836.0,486.0 836.0,486.0 832.0,486.0 832.0,486.0 828.0,486.0 828.0,486.0 823.0,486.0 823.0,485.0 821.0,485.0"/>
<rect x="292.50" y="479.70" width="2.50" height="6.80" fill="#04f008"/>
<rect x="516.60" y="482.90" width="3.20" height="3.60" fill="#04f008"/>
<rect x="552.40" y="481.10" width="2.60" height="5.40" fill="#04f008"/>
<rect x="776.60" y="481.40" width="2.40" height="5.10" fill="#04f008"/>
<rect x="811.30" y="480.10" width="4.50" height="6.40" fill="#04f008"/>
<polygon fill="#04f008" points="18.8,306.5 21.8,306.5 21.8,306.5 26.8,306.5 26.8,305.5 31.8,305.5 31.8,306.5 33.8,306.5 33.8,305.5 35.8,305.5 35.8,306.5 37.8,306.5 37.8,306.5 39.8,306.5 39.8,306.5 42.0,306.5 42.0,487.0 40.8,487.0 40.8,487.0 39.8,487.0 39.8,487.0 37.8,487.0 37.8,487.0 33.8,487.0 33.8,486.5 30.8,486.5 30.8,486.5 26.8,486.5 26.8,489.5 24.8,489.5 24.8,486.5 23.8,486.5 23.8,489.5 20.8,489.5 20.8,486.5 18.8,486.5"/>
<rect x="52.10" y="307.40" width="1.20" height="184.50" fill="#04f008"/>
<rect x="70.20" y="480.90" width="1.20" height="25.00" fill="#04f008"/>
<polygon fill="#04f008" points="71.5,309.0 73.5,309.0 73.5,308.0 76.5,308.0 76.5,308.0 79.5,308.0 79.5,309.5 82.5,309.5 82.5,307.5 84.5,307.5 84.5,309.5 89.5,309.5 89.5,308.5 92.5,308.5 92.5,311.0 95.5,311.0 95.5,310.0 96.5,310.0 96.5,310.0 97.0,310.0 97.0,487.0 95.5,487.0 95.5,487.0 93.5,487.0 93.5,490.0 92.5,490.0 92.5,487.0 87.5,487.0 87.5,490.0 85.5,490.0 85.5,490.0 81.5,490.0 81.5,488.0 80.5,488.0 80.5,488.0 77.5,488.0 77.5,488.0 76.5,488.0 76.5,487.0 73.5,487.0 73.5,487.5 71.5,487.5"/>
<polygon fill="#04f008" points="97.0,309.0 100.0,309.0 100.0,310.0 102.0,310.0 102.0,310.0 105.0,310.0 105.0,310.5 107.0,310.5 107.0,310.5 109.0,310.5 109.0,310.5 111.0,310.5 111.0,310.5 112.0,310.5 112.0,310.5 114.0,310.5 114.0,312.0 118.0,312.0 118.0,311.0 121.0,311.0 121.0,310.0 122.7,310.0 122.7,491.5 120.0,491.5 120.0,490.5 115.0,490.5 115.0,489.5 113.0,489.5 113.0,490.0 109.0,490.0 109.0,489.0 107.0,489.0 107.0,490.0 104.0,490.0 104.0,493.0 99.0,493.0 99.0,490.0 97.0,490.0"/>
<rect x="122.40" y="304.20" width="1.20" height="11.40" fill="#04f008"/>
<rect x="256.40" y="310.60" width="1.50" height="173.80" fill="#04f008"/>
<polygon fill="#04f008" points="259.6,310.0 263.6,310.0 263.6,308.0 267.6,308.0 267.6,309.0 271.6,309.0 271.6,309.0 274.6,309.0 274.6,309.0 276.6,309.0 276.6,309.0 281.6,309.0 281.6,308.0 285.6,308.0 285.6,307.0 290.6,307.0 290.6,309.0 291.6,309.0 291.6,309.0 292.8,309.0 292.8,490.0 291.6,490.0 291.6,492.0 286.6,492.0 286.6,489.0 284.6,489.0 284.6,489.0 283.6,489.0 283.6,490.0 278.6,490.0 278.6,488.5 276.6,488.5 276.6,489.5 272.6,489.5 272.6,489.5 271.6,489.5 271.6,488.5 269.6,488.5 269.6,489.5 267.6,489.5 267.6,488.5 262.6,488.5 262.6,488.5 259.6,488.5"/>
<rect x="265.00" y="301.60" width="1.20" height="9.00" fill="#04f008"/>
<polygon fill="#04f008" points="294.7,309.0 297.7,309.0 297.7,308.5 302.0,308.5 302.0,487.0 297.7,487.0 297.7,487.0 296.7,487.0 296.7,486.0 294.7,486.0"/>
<rect x="292.80" y="308.40" width="1.90" height="1.70" fill="#04f008"/>
<rect x="312.10" y="314.60" width="1.80" height="170.30" fill="#04f008"/>
<polygon fill="#04f008" points="331.8,308.5 334.8,308.5 334.8,309.5 339.8,309.5 339.8,306.5 341.8,306.5 341.8,308.5 343.8,308.5 343.8,307.5 345.8,307.5 345.8,308.0 346.8,308.0 346.8,309.0 350.8,309.0 350.8,309.0 352.0,309.0 352.0,487.5 350.8,487.5 350.8,488.0 346.8,488.0 346.8,487.0 343.8,487.0 343.8,486.5 341.8,486.5 341.8,486.5 338.8,486.5 338.8,486.5 334.8,486.5 334.8,486.0 331.8,486.0"/>
<polygon fill="#04f008" points="352.0,309.0 356.0,309.0 356.0,310.5 360.0,310.5 360.0,309.0 365.0,309.0 365.0,309.5 368.0,309.5 368.0,310.5 369.0,310.5 369.0,310.0 374.0,310.0 374.0,311.0 375.0,311.0 375.0,311.0 377.0,311.0 377.0,310.5 378.0,310.5 378.0,310.5 380.0,310.5 380.0,311.5 380.2,311.5 380.2,491.0 376.0,491.0 376.0,490.5 372.0,490.5 372.0,489.0 367.0,489.0 367.0,490.5 364.0,490.5 364.0,492.5 362.0,492.5 362.0,489.5 360.0,489.5 360.0,489.0 355.0,489.0 355.0,491.5 352.0,491.5"/>
<rect x="512.80" y="309.60" width="4.10" height="176.80" fill="#04f008"/>
<rect x="516.90" y="308.60" width="2.60" height="6.00" fill="#04f008"/>
<polygon fill="#04f008" points="519.5,308.5 522.5,308.5 522.5,308.5 525.5,308.5 525.5,307.5 526.5,307.5 526.5,308.5 528.5,308.5 528.5,308.5 533.5,308.5 533.5,307.5 537.5,307.5 537.5,308.5 539.5,308.5 539.5,307.5 541.5,307.5 541.5,306.5 543.5,306.5 543.5,308.5 544.5,308.5 544.5,307.5 549.5,307.5 549.5,308.5 551.5,308.5 551.5,309.5 552.7,309.5 552.7,488.5 552.5,488.5 552.5,487.0 548.5,487.0 548.5,488.0 546.5,488.0 546.5,491.0 542.5,491.0 542.5,488.0 540.5,488.0 540.5,488.0 536.5,488.0 536.5,488.0 534.5,488.0 534.5,489.0 529.5,489.0 529.5,488.5 527.5,488.5 527.5,486.5 526.5,486.5 526.5,487.5 524.5,487.5 524.5,486.5 519.5,486.5"/>
<rect x="552.70" y="308.40" width="2.00" height="2.20" fill="#04f008"/>
<polygon fill="#04f008" points="554.7,307.5 555.7,307.5 555.7,307.5 556.7,307.5 556.7,308.5 559.7,308.5 559.7,308.5 560.2,308.5 560.2,487.5 558.7,487.5 558.7,486.5 556.7,486.5 556.7,487.5 554.7,487.5"/>
<polygon fill="#04f008" points="591.4,308.0 594.4,308.0 594.4,307.5 596.4,307.5 596.4,309.5 599.4,309.5 599.4,308.0 603.4,308.0 603.4,309.0 605.4,309.0 605.4,309.0 609.4,309.0 609.4,309.5 610.4,309.5 610.4,310.5 613.4,310.5 613.4,308.5 614.4,308.5 614.4,309.0 619.4,309.0 619.4,311.0 620.0,311.0 620.0,489.5 619.4,489.5 619.4,489.5 617.4,489.5 617.4,490.0 615.4,490.0 615.4,492.0 614.4,492.0 614.4,489.0 609.4,489.0 609.4,489.0 608.4,489.0 608.4,488.5 603.4,488.5 603.4,489.5 598.4,489.5 598.4,489.0 597.4,489.0 597.4,489.0 596.4,489.0 596.4,489.0 594.4,489.0 594.4,487.0 591.4,487.0"/>
<polygon fill="#04f008" points="620.0,309.5 621.0,309.5 621.0,310.0 626.0,310.0 626.0,311.5 629.0,311.5 629.0,311.5 634.0,311.5 634.0,313.0 634.8,313.0 634.8,492.0 634.0,492.0 634.0,494.5 631.0,494.5 631.0,491.5 630.0,491.5 630.0,494.5 629.0,494.5 629.0,491.5 628.0,491.5 628.0,491.0 626.0,491.0 626.0,492.0 622.0,492.0 622.0,490.5 620.0,490.5"/>
<rect x="772.20" y="310.10" width="4.70" height="176.20" fill="#04f008"/>
<rect x="776.90" y="309.60" width="1.90" height="8.00" fill="#04f008"/>
<polygon fill="#04f008" points="778.8,308.5 780.8,308.5 780.8,308.5 782.8,308.5 782.8,308.5 784.8,308.5 784.8,306.5 787.8,306.5 787.8,308.5 788.8,308.5 788.8,309.5 791.8,309.5 791.8,308.0 793.8,308.0 793.8,307.0 798.8,307.0 798.8,308.0 799.8,308.0 799.8,306.0 803.8,306.0 803.8,307.0 805.8,307.0 805.8,308.0 806.8,308.0 806.8,306.0 810.8,306.0 810.8,308.0 811.6,308.0 811.6,485.5 810.8,485.5 810.8,487.5 806.8,487.5 806.8,486.5 803.8,486.5 803.8,486.5 799.8,486.5 799.8,487.5 795.8,487.5 795.8,485.5 794.8,485.5 794.8,487.5 791.8,487.5 791.8,486.5 786.8,486.5 786.8,486.5 781.8,486.5 781.8,486.5 778.8,486.5"/>
<polygon fill="#04f008" points="815.5,307.5 818.5,307.5 818.5,307.5 821.5,307.5 821.5,307.0 822.2,307.0 822.2,489.5 819.5,489.5 819.5,487.0 815.5,487.0"/>
<rect x="820.40" y="271.00" width="1.60" height="38.60" fill="#04f008"/>
<polygon fill="#04f008" points="852.5,308.0 854.5,308.0 854.5,307.5 859.5,307.5 859.5,306.5 861.5,306.5 861.5,307.5 865.5,307.5 865.5,307.5 866.0,307.5 866.0,490.5 864.5,490.5 864.5,488.5 862.5,488.5 862.5,487.0 857.5,487.0 857.5,485.5 852.5,485.5"/>
<polygon fill="#04f008" points="866.0,309.0 868.0,309.0 868.0,310.5 872.0,310.5 872.0,309.5 875.0,309.5 875.0,310.5 876.0,310.5 876.0,311.0 878.0,311.0 878.0,311.5 882.0,311.5 882.0,311.0 884.0,311.0 884.0,312.5 889.0,312.5 889.0,312.0 891.0,312.0 891.0,492.0 890.0,492.0 890.0,491.5 886.0,491.5 886.0,491.0 883.0,491.0 883.0,490.5 880.0,490.5 880.0,490.0 875.0,490.0 875.0,489.5 873.0,489.5 873.0,488.0 871.0,488.0 871.0,488.0 866.0,488.0"/>
<polygon fill="#04f008" points="870.5,310.1 873.3,306.6 876.0,310.1"/>
</g>
<polygon fill="#1e96e4" points="501.5,40 521,40 521,43.5 513,54 510,54 501.5,43.5"/>
<polygon fill="#f8f404" points="0,221 9.2,221 18.4,233.2 9.2,245.4 0,245.4"/>
<g fill="#111"><rect x="1" y="224.4" width="6.3" height="1.3"/><rect x="3.5" y="224.4" width="1.3" height="12.2"/><rect x="1.2" y="240.2" width="5.8" height="1.3"/></g>
<polygon fill="#04f008" points="0,479.7 9.8,479.7 18.4,489.3 9.8,498.8 0,498.8"/>
<text x="0.6" y="494.7" font-family="Liberation Sans, sans-serif" font-size="16.3" fill="#032a03" stroke="#032a03" stroke-width="0.3" textLength="7.6" lengthAdjust="spacingAndGlyphs">2</text>
<text aria-label="Hantek" y="34.6" font-family="Liberation Sans, sans-serif" font-weight="bold" fill="#1a84ff" stroke="#1a84ff" stroke-width="1.6" stroke-linejoin="round"><tspan x="19.0" font-size="45.5" textLength="31.1" lengthAdjust="spacingAndGlyphs">H</tspan><tspan x="51.3" font-size="46" textLength="25.2" lengthAdjust="spacingAndGlyphs">a</tspan><tspan x="77.3" font-size="46" textLength="32.6" lengthAdjust="spacingAndGlyphs">n</tspan><tspan x="111.3" font-size="48.3" textLength="16.1" lengthAdjust="spacingAndGlyphs">t</tspan><tspan x="129.3" font-size="46" textLength="31.7" lengthAdjust="spacingAndGlyphs">e</tspan><tspan x="158.4" font-size="43.3" textLength="26.5" lengthAdjust="spacingAndGlyphs">k</tspan></text>
<rect x="210.9" y="5.9" width="87.2" height="29.7" rx="3.5" fill="#04f008"/>
<text x="240.9" y="29.4" font-family="Liberation Sans, sans-serif" font-weight="bold" font-size="23.2" fill="#031003" stroke="#031003" stroke-width="0.8" textLength="27.2" lengthAdjust="spacingAndGlyphs">TD</text>
<rect x="320" y="6.1" width="25.6" height="29.3" rx="3.5" fill="#22cee8"/>
<text x="323.2" y="30.4" font-family="Liberation Sans, sans-serif" font-weight="bold" font-size="27.4" fill="#03090c" stroke="#03090c" stroke-width="0.5" textLength="19.4" lengthAdjust="spacingAndGlyphs">H</text>
<text x="372.6" y="29" font-family="Liberation Sans, sans-serif" font-size="20.6" fill="#f4f4f4" stroke="#f4f4f4" stroke-width="0.6" textLength="44.5" lengthAdjust="spacing">5ms</text>
<text x="463.6" y="29" font-family="Liberation Sans, sans-serif" font-size="20.6" fill="#f4f4f4" stroke="#f4f4f4" stroke-width="0.6" textLength="125" lengthAdjust="spacing">50.00KSa/s</text>
<text x="618.8" y="28.4" font-family="Liberation Sans, sans-serif" font-size="20.6" fill="#f4f4f4" stroke="#f4f4f4" stroke-width="0.6" textLength="52.5" lengthAdjust="spacing">4Kpt</text>
<rect x="710.6" y="6" width="25.8" height="29.4" rx="3.5" fill="#22cee8"/>
<text x="712.6" y="31" font-family="Liberation Sans, sans-serif" font-weight="bold" font-size="26.8" fill="#03090c" stroke="#03090c" stroke-width="0.5" textLength="19.6" lengthAdjust="spacingAndGlyphs">D</text>
<text x="766" y="29" font-family="Liberation Sans, sans-serif" font-size="20.6" fill="#f4f4f4" stroke="#f4f4f4" stroke-width="0.6" textLength="57" lengthAdjust="spacing">0.00s</text>
<rect x="858" y="6" width="25.2" height="29.4" rx="3.5" fill="#22cee8"/>
<text x="862.9" y="31" font-family="Liberation Sans, sans-serif" font-weight="bold" font-size="26.8" fill="#03090c" stroke="#03090c" stroke-width="0.5" textLength="16.4" lengthAdjust="spacingAndGlyphs">T</text>
<text x="888.8" y="31.6" font-family="Liberation Sans, sans-serif" font-size="21.2" fill="#f2ee1e" stroke="#f2ee1e" stroke-width="0.6" textLength="71.5" lengthAdjust="spacing">400mV</text>
<text x="20.3" y="100.2" font-family="Liberation Sans, sans-serif" font-size="13.2" fill="#222" fill-opacity="0.35" textLength="40.5" lengthAdjust="spacing">Bryan1</text><text x="19.3" y="99.2" font-family="Liberation Sans, sans-serif" font-size="13.2" textLength="40.5" lengthAdjust="spacing"><tspan fill="#7e6432">Bry</tspan><tspan fill="#dcd8d8">an1</tspan></text>
<text x="20.3" y="120.4" font-family="Liberation Sans, sans-serif" font-size="10.6" fill="#222" fill-opacity="0.35" textLength="109.5" lengthAdjust="spacing">www.thebackshed.com</text><text x="19.3" y="119.4" font-family="Liberation Sans, sans-serif" font-size="10.6" textLength="109.5" lengthAdjust="spacing"><tspan fill="#7e6432">www.</tspan><tspan fill="#dcd8d8">theba</tspan><tspan fill="#7e6432">ckshed.co</tspan><tspan fill="#dcd8d8">m</tspan></text>
<text x="20.3" y="135" font-family="Liberation Sans, sans-serif" font-size="10.6" fill="#222" fill-opacity="0.35" textLength="53.5" lengthAdjust="spacing">2026-03-09</text><text x="19.3" y="134" font-family="Liberation Sans, sans-serif" font-size="10.6" textLength="53.5" lengthAdjust="spacing"><tspan fill="#7e6432">2026</tspan><tspan fill="#dcd8d8">-03-09</tspan></text>
<rect x="19.6" y="560.2" width="254.6" height="46.8" rx="2.5" fill="#f8f404"/>
<clipPath id="c1"><rect x="20" y="562" width="30" height="31.6"/><rect x="37.6" y="593" width="5" height="4.9"/></clipPath>
<text x="28.4" y="597.9" font-family="Liberation Sans, sans-serif" font-size="38.3" fill="#141400" stroke="#141400" stroke-width="1.3" clip-path="url(#c1)">1</text>
<text x="48.6" y="598" font-family="Liberation Sans, sans-serif" font-size="31.4" fill="#141400" stroke="#141400" stroke-width="1.3" textLength="37.6" lengthAdjust="spacingAndGlyphs">DC</text>
<text x="234.2" y="597.3" font-family="Liberation Sans, sans-serif" font-size="28" fill="#141400" stroke="#141400" stroke-width="0.8" textLength="36" lengthAdjust="spacingAndGlyphs">5V</text>
<rect x="282.4" y="560.2" width="254.3" height="46.8" rx="2.5" fill="#04f008"/>
<text x="289.2" y="598" font-family="Liberation Sans, sans-serif" font-size="39.6" fill="#062006" stroke="#062006" stroke-width="1.2" textLength="19.6" lengthAdjust="spacingAndGlyphs">2</text>
<text x="311.1" y="598" font-family="Liberation Sans, sans-serif" font-size="31.4" fill="#062006" stroke="#062006" stroke-width="1.3" textLength="37.6" lengthAdjust="spacingAndGlyphs">DC</text>
<text x="496.6" y="597.3" font-family="Liberation Sans, sans-serif" font-size="28" fill="#062006" stroke="#062006" stroke-width="0.8" textLength="36" lengthAdjust="spacingAndGlyphs">5V</text>
<rect x="545" y="560.2" width="254.5" height="46.7" rx="2.5" fill="#fa026e"/>
<text x="551" y="596.6" font-family="Liberation Sans, sans-serif" font-size="36.6" fill="#2a0414" stroke="#2a0414" stroke-width="1.1" textLength="30.6" lengthAdjust="spacingAndGlyphs">G</text>
<polyline fill="none" stroke="#2a0414" stroke-width="3.2" stroke-linecap="square" stroke-linejoin="miter" points="598.2,572 598.2,565.4 621,565.4 621,577.4 641.6,577.4 641.6,570.4"/>
<text x="673.4" y="580" font-family="Liberation Sans, sans-serif" font-weight="bold" font-size="20.2" fill="#2a0414" stroke="#2a0414" stroke-width="0.5" letter-spacing="0.9" textLength="95" lengthAdjust="spacingAndGlyphs">1.00KHz</text>
<text y="600.4" font-family="Liberation Sans, sans-serif" font-weight="bold" font-size="19.6" fill="#2a0414" stroke="#2a0414" stroke-width="0.5" letter-spacing="0.9" xml:space="preserve"><tspan x="596.6" textLength="93.6" lengthAdjust="spacingAndGlyphs">1.50Vpp</tspan> <tspan x="704.2" textLength="45.6" lengthAdjust="spacingAndGlyphs">0mv</tspan></text>
<path fill="#2462f2" d="M831.4,578.9 L819,578.9 C811,578.9 806.7,584 806.7,590 C806.7,596.4 811,600.4 818,600.4 L827.8,600.4 Z"/>
<polygon fill="#fafafa" points="832.5,582.4 840.7,582.4 838.4,598 829.8,598"/>
<rect x="834.6" y="585.4" width="2.6" height="2.8" fill="#000"/><rect x="833.2" y="592" width="2.6" height="2.8" fill="#000"/>
</svg>
</body></html>
